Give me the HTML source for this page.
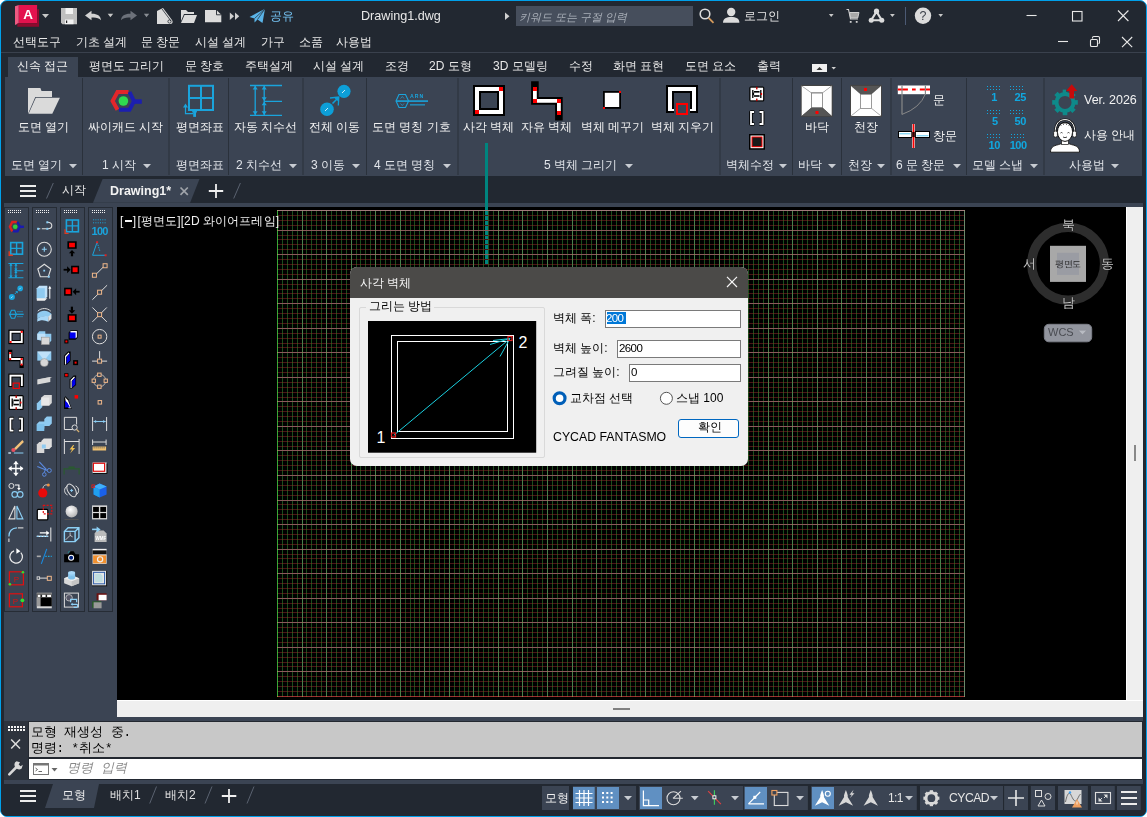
<!DOCTYPE html>
<html><head><meta charset="utf-8">
<style>
*{margin:0;padding:0;box-sizing:border-box}
html,body{width:1147px;height:817px;overflow:hidden;background:#ffffff}
body{font-family:"Liberation Sans",sans-serif;position:relative}
.a{position:absolute}
.t{position:absolute;white-space:pre;font-size:12px;line-height:14px;color:#f2f2f2}
#win{position:absolute;left:0;top:0;width:1147px;height:817px;background:#222831;border:1px solid #00a0ea;border-radius:7px;overflow:hidden}
svg{position:absolute;overflow:visible}
</style></head><body>
<div id="win"></div>
<!-- menu separator -->
<div class="a" style="left:1px;top:52px;width:1145px;height:1px;background:#3a414d"></div>
<!-- ribbon -->
<div class="a" style="left:8px;top:57px;width:70px;height:20px;background:#3b4453"></div>
<div class="a" style="left:5px;top:77px;width:1137px;height:99px;background:#3b4453"></div>
<!-- ===== FILE TABS ===== -->
<svg style="left:0;top:176px" width="260" height="28">
 <path d="M20,10 H36 M20,15 H36 M20,20 H36" stroke="#ececec" stroke-width="2"/>
 <path d="M53.3,7 L46.5,22.5 M240.4,7 L233.7,22.5" stroke="#5a6270" stroke-width="1"/>
 <polygon points="102.6,3 199.5,3 190.1,26.8 93,26.8" fill="#3b4453"/>
 <path d="M180.5,11.5 L187.8,18.8 M187.8,11.5 L180.5,18.8" stroke="#a0a4aa" stroke-width="1.7"/>
 <path d="M216,8 V22 M208.8,15 H223.2" stroke="#f0f0f0" stroke-width="1.8"/>
</svg>
<div class="t" style="left:62px;top:183px;color:#e6e6e6">시작</div>
<div class="t" style="left:110px;top:183.5px;color:#f2f2f2;font-weight:bold;font-size:12.5px">Drawing1*</div>
<!-- toolbar strip -->
<div class="a" style="left:4px;top:203px;width:1139px;height:4px;background:#3b4453"></div>
<div class="a" style="left:4px;top:207px;width:113px;height:510px;background:#3b4453"></div>
<!-- viewport -->
<div class="a" style="left:117px;top:207px;width:1009px;height:493px;background:#000"></div>
<div class="a" style="left:1126px;top:207px;width:17px;height:510px;background:#efefef;border-left:1px solid #fff"></div>
<div class="a" style="left:117px;top:700px;width:1026px;height:17px;background:#efefef;border-top:1px solid #fff"></div>
<div class="a" style="left:4px;top:717px;width:1139px;height:63px;background:#3b4453"></div>
<div class="a" style="left:4px;top:721px;width:25px;height:59px;background:#2d333d"></div>
<div class="a" style="left:28px;top:721px;width:1115px;height:58px;background:#232830"></div>
<div class="a" style="left:29px;top:722px;width:1113px;height:35px;background:#c8c8c8"></div>
<div class="a" style="left:29px;top:759px;width:1113px;height:20px;background:#fff"></div>

<!-- ===== TITLE BAR ===== -->
<svg style="left:0;top:0" width="300" height="30">
 <polygon points="15,6.3 18.8,5 18.8,23.2 15,25" fill="#ee5a82"/>
 <rect x="18.8" y="5" width="18.3" height="18.2" fill="#e3124e"/>
 <polygon points="17.3,23.2 37.1,23.2 37.1,9.2 39,9.2 39,26.8 17.3,26.8" fill="#8e0a2e"/>
 <text x="28" y="19" font-family="Liberation Sans" font-weight="bold" font-size="13.5" fill="#fff" text-anchor="middle">A</text>
 <polygon points="42,14 49,14 45.5,18" fill="#c8c8c8"/>
 <!-- floppy -->
 <path d="M61,8 H77 V24.2 H62.5 L61,22.7 Z" fill="#bfbfbf"/>
 <rect x="65.5" y="8" width="7.5" height="6" fill="#f2f2f2"/>
 <rect x="65" y="19.5" width="8.5" height="4.7" fill="#f2f2f2"/>
 <rect x="66" y="20.5" width="1.2" height="2.5" fill="#222"/>
 <!-- undo -->
 <path d="M85,15.5 L91.5,10.7 V13.8 C97,13.6 100.6,15.6 101,20.3 C99,17.8 96,17.2 91.5,17.5 V20.3 Z" fill="#d2d2d2"/>
 <polygon points="107.7,13.8 113.2,13.8 110.4,17.3" fill="#c8c8c8"/>
 <path d="M137,15.5 L130.5,10.7 V13.8 C125,13.6 121.4,15.6 121,20.3 C123,17.8 126,17.2 130.5,17.5 V20.3 Z" fill="#6c717a"/>
 <polygon points="143.9,13.8 149.2,13.8 146.5,17.3" fill="#8a8e95"/>
 <!-- sheet roll -->
 <path d="M157,11 L163,8 L172,20 C173.5,22.5 172,24 170,24 H157 Z" fill="#dcdcdc"/>
 <path d="M162,9 L171,21" stroke="#222831" stroke-width="0.8" fill="none"/>
 <circle cx="169.5" cy="21.5" r="1.6" fill="none" stroke="#222831" stroke-width="0.8"/>
 <!-- folder -->
 <path d="M181,10 H186 L188,12 H194 V14 H184 L181,21 Z" fill="#dcdcdc"/>
 <path d="M184.5,15 H197 L194,23 H181 Z" fill="#dcdcdc"/>
 <!-- page -->
 <path d="M205,10 H216.5 L221.3,14.8 V22.3 H205 Z" fill="#dcdcdc"/>
 <path d="M216.5,10 V14.8 H221.3" fill="none" stroke="#222831" stroke-width="0.9"/>
 <!-- >> -->
 <polygon points="229.8,12.5 234,16.2 229.8,20" fill="#d0d0d0"/>
 <polygon points="235,12.5 239.2,16.2 235,20" fill="#d0d0d0"/>
 <!-- plane -->
 <path d="M249.5,17 L265,8.8 L262.5,22.9 L257.5,19.5 L254.5,22.5 L254.5,18.5 Z" fill="#5ab4e8"/>
 <path d="M254.5,18.5 L265,8.8 M257.5,19.5 L265,8.8" stroke="#222831" stroke-width="0.7"/>
</svg>
<div class="t" style="left:270px;top:9px;color:#74c2f2">공유</div>
<div class="t" style="left:361px;top:9px;font-size:12.6px;color:#e8e8e8">Drawing1.dwg</div>
<svg style="left:500px;top:0" width="30" height="30"><polygon points="505,12.5 509.5,16.2 505,20" transform="translate(-500,0)" fill="#d0d0d0"/></svg>
<div class="a" style="left:516px;top:6px;width:177px;height:20px;background:#464e5c"></div>
<div class="t" style="left:519px;top:9.5px;font-style:italic;color:#a9afb8;font-size:11px">키워드 또는 구절 입력</div>
<svg style="left:690px;top:0" width="270" height="30">
 <g transform="translate(-690,0)">
 <circle cx="705" cy="14" r="4.8" fill="none" stroke="#dcdcdc" stroke-width="1.6"/>
 <path d="M708.6,17.8 L713.5,22.8" stroke="#d39a5c" stroke-width="1.8"/>
 <circle cx="731.2" cy="12" r="4.2" fill="#dcdcdc"/>
 <path d="M723,22.7 C723,18.5 726.5,17 731.2,17 C736,17 739.4,18.5 739.4,22.7 Z" fill="#dcdcdc"/>
 <polygon points="828.9,14 833.6,14 831.2,17" fill="#c8c8c8"/>
 <!-- cart -->
 <path d="M846.5,9.5 H848.5 L850.5,19 H858" fill="none" stroke="#d0d0d0" stroke-width="1.1"/>
 <path d="M849.5,12.5 H859 L857.7,18 H850.7 Z" fill="#a8a8a8" stroke="#d0d0d0" stroke-width="1"/>
 <rect x="849.8" y="21" width="1.8" height="1.8" fill="#d0d0d0"/><rect x="855.8" y="21" width="1.8" height="1.8" fill="#d0d0d0"/>
 <!-- A360 -->
 <path d="M876.5,11.6 L871.2,20.2 H881.8 Z" fill="none" stroke="#dcdcdc" stroke-width="2.1" stroke-linejoin="round"/>
 <circle cx="876.5" cy="11.2" r="2.6" fill="#dcdcdc"/><circle cx="871.2" cy="20.3" r="2.5" fill="#dcdcdc"/><circle cx="881.8" cy="20.3" r="2.5" fill="#dcdcdc"/>
 <polygon points="890,14 894.8,14 892.4,17" fill="#c8c8c8"/>
 <rect x="905" y="7" width="1" height="18" fill="#4c5a74"/>
 <circle cx="923" cy="15.8" r="8.2" fill="#dcdcdc"/>
 <text x="923" y="20.3" font-family="Liberation Sans" font-size="12.5" fill="#3a3f48" text-anchor="middle">?</text>
 <polygon points="938.4,14 943,14 940.7,17" fill="#c8c8c8"/>
 </g>
</svg>
<div class="t" style="left:744px;top:9px;color:#e8e8e8">로그인</div>
<svg style="left:1000px;top:0" width="147" height="55">
 <g transform="translate(-1000,0)" stroke="#e8e8e8" stroke-width="1.1" fill="none">
 <path d="M1026.5,15.5 H1036.6"/>
 <rect x="1072.5" y="11.5" width="9.5" height="9.5"/>
 <path d="M1118,10.5 L1128.4,21 M1128.4,10.5 L1118,21"/>
 <path d="M1058,41.5 H1068"/>
 <rect x="1090.5" y="39.5" width="7" height="7" rx="1.3"/>
 <path d="M1092.5,38.5 V37.8 Q1092.5,36.5 1093.8,36.5 H1098.2 Q1099.5,36.5 1099.5,37.8 V42.2 Q1099.5,43.5 1098.5,43.5"/>
 <path d="M1122,37 L1132.2,47.2 M1132.2,37 L1122,47.2"/>
 </g>
</svg>
<!-- ===== MENU ===== -->
<div class="t" style="left:13px;top:35px;color:#e8e8e8">선택도구</div>
<div class="t" style="left:76px;top:35px;color:#e8e8e8">기초 설계</div>
<div class="t" style="left:141px;top:35px;color:#e8e8e8">문 창문</div>
<div class="t" style="left:195px;top:35px;color:#e8e8e8">시설 설계</div>
<div class="t" style="left:261px;top:35px;color:#e8e8e8">가구</div>
<div class="t" style="left:299px;top:35px;color:#e8e8e8">소품</div>
<div class="t" style="left:336px;top:35px;color:#e8e8e8">사용법</div>
<!-- ===== TABS ===== -->
<div class="t" style="left:17px;top:59px;color:#f0f0f0">신속 접근</div>
<div class="t" style="left:89px;top:59px;color:#e8e8e8">평면도 그리기</div>
<div class="t" style="left:185px;top:59px;color:#e8e8e8">문 창호</div>
<div class="t" style="left:245px;top:59px;color:#e8e8e8">주택설계</div>
<div class="t" style="left:313px;top:59px;color:#e8e8e8">시설 설계</div>
<div class="t" style="left:385px;top:59px;color:#e8e8e8">조경</div>
<div class="t" style="left:429px;top:59px;color:#e8e8e8">2D 도형</div>
<div class="t" style="left:493px;top:59px;color:#e8e8e8">3D 모델링</div>
<div class="t" style="left:569px;top:59px;color:#e8e8e8">수정</div>
<div class="t" style="left:613px;top:59px;color:#e8e8e8">화면 표현</div>
<div class="t" style="left:685px;top:59px;color:#e8e8e8">도면 요소</div>
<div class="t" style="left:757px;top:59px;color:#e8e8e8">출력</div>
<div class="a" style="left:812px;top:64px;width:15px;height:8px;background:#f0f0f0"></div>
<svg style="left:812px;top:64px" width="30" height="10"><polygon points="4.5,6 10.5,6 7.5,3" fill="#333"/><polygon points="19.5,3 24,3 21.7,5.5" fill="#d0d0d0"/></svg>

<!-- ===== RIBBON ===== -->
<svg style="left:0;top:0" width="1147" height="180">
 <g fill="#2a313b">
  <rect x="82" y="78" width="1" height="97"/><rect x="168.5" y="78" width="1" height="97"/>
  <rect x="228" y="78" width="1" height="97"/><rect x="302.5" y="78" width="1" height="97"/>
  <rect x="366" y="78" width="1" height="97"/><rect x="457.5" y="78" width="1" height="97"/>
  <rect x="719.5" y="78" width="1" height="97"/><rect x="792" y="78" width="1" height="97"/>
  <rect x="841" y="78" width="1" height="97"/><rect x="890.5" y="78" width="1" height="97"/>
  <rect x="966" y="78" width="1" height="97"/><rect x="1043.5" y="78" width="1" height="97"/>
 </g>
 <!-- folder -->
 <path d="M28,88 H40.4 L41.5,91 H52 V97 H35.3 L28,113.8 Z" fill="#dadada"/>
 <path d="M35.8,97.8 H59.9 L52.3,113.8 H28.6 Z" fill="#dadada"/>
 <!-- cycad -->
 <path d="M128.5,92 H117.5 L112.6,101 L117.5,109.8" fill="none" stroke="#e3262a" stroke-width="4"/>
 <path d="M129.5,92 L134,101.3 L129.5,109.8 H119" fill="none" stroke="#1c1fb0" stroke-width="4"/>
 <rect x="133" y="99.3" width="8.8" height="4.5" fill="#1c1fb0"/>
 <circle cx="123.4" cy="101" r="4.8" fill="#2fdb4f"/>
 <!-- grid -->
 <g fill="none" stroke="#1aa4dc" stroke-width="2">
  <rect x="189" y="85.8" width="24" height="24.2"/>
  <path d="M201,85.8 V110 M189,98 H213"/>
 </g>
 <path d="M185.5,105 V113.6 H193" fill="none" stroke="#1aa4dc" stroke-width="1.2"/>
 <polygon points="183,107.5 185.5,103.6 188,107.5" fill="#1aa4dc"/>
 <rect x="192.2" y="110.5" width="4.7" height="2" fill="#1aa4dc"/><rect x="193.2" y="112" width="2.8" height="4.9" fill="#1aa4dc"/>
 <!-- dimension -->
 <g stroke="#1aa4dc" stroke-width="1.3" fill="none">
  <path d="M250,85.5 H282 M264.7,101.3 H282 M250,115.3 H282 M255.2,85.5 V115.3 M264.2,85.5 V115.3"/>
 </g>
 <g fill="#1aa4dc">
  <polygon points="252.7,89.5 255.2,85.8 257.7,89.5"/><polygon points="252.7,111.3 255.2,115 257.7,111.3"/>
  <polygon points="261.7,89.5 264.2,85.8 266.7,89.5"/><polygon points="261.7,97.3 264.2,101 266.7,97.3"/>
  <polygon points="261.7,105.3 264.2,101.6 266.7,105.3"/><polygon points="261.7,111.3 264.2,115 266.7,111.3"/>
 </g>
 <!-- move -->
 <circle cx="327" cy="109.2" r="6.8" fill="#0d9fd8"/><circle cx="344" cy="91.3" r="6.6" fill="#0d9fd8"/>
 <path d="M325,111 L328,108 M342,93 L345,90" stroke="#fff" stroke-width="0.8"/>
 <path d="M332.5,103.5 L338.5,97.5" stroke="#0d9fd8" stroke-width="1.6"/>
 <polygon points="334,97 338.8,97 338.8,101.8 337.5,100.8 335,98.5" fill="#0d9fd8"/>
 <path d="M330,98 L338.8,97 L338.3,105.5" fill="none" stroke="#0d9fd8" stroke-width="1.3"/>
 <!-- name symbol -->
 <path d="M399,94.5 H405.5 L408.6,101 L405.5,107.5 H399 L396,101 Z" fill="none" stroke="#1aa4dc" stroke-width="1.1"/>
 <rect x="396" y="100.3" width="32" height="1.6" fill="#1aa4dc"/>
 <path d="M400.5,98.5 L402.3,96.5 L404,98.5 M400.5,103.5 L402.3,105.5 L404,103.5" fill="none" stroke="#1aa4dc" stroke-width="0.7"/>
 <text x="410" y="98.2" font-family="Liberation Sans" font-weight="bold" font-size="5.2" fill="#1aa4dc" letter-spacing="1">ARN</text>
 <g fill="#1aa4dc"><rect x="410" y="104" width="15" height="1.6" opacity="0.7"/></g>
 <!-- rect wall -->
 <rect x="473" y="85" width="32" height="31" fill="#000"/>
 <rect x="475" y="87" width="28" height="27" fill="#fff"/>
 <rect x="479" y="91" width="20" height="19" fill="#000"/>
 <rect x="481" y="93" width="16" height="15" fill="#3b4453"/>
 <rect x="499" y="87" width="4" height="4" fill="#f00"/><rect x="475" y="110" width="4" height="4" fill="#f00"/>
 <!-- free wall -->
 <path d="M534.9,85 V100.9 H558.9 V116.6" fill="none" stroke="#000" stroke-width="7.6" stroke-linecap="square"/>
 <path d="M534.9,87 V100.9 H558.9 V114.6" fill="none" stroke="#fff" stroke-width="3.8"/>
 <g fill="#f00"><rect x="533" y="87" width="4" height="4"/><rect x="533" y="99" width="4" height="4"/><rect x="557" y="99" width="4" height="4"/><rect x="557" y="111" width="4" height="4"/></g>
 <!-- fill wall -->
 <rect x="603" y="91" width="18" height="17.8" fill="#000"/>
 <rect x="604.8" y="92.8" width="14.4" height="14.2" fill="#fff"/>
 <rect x="619" y="91" width="2" height="2" fill="#f00"/><rect x="603" y="107" width="2" height="2" fill="#f00"/>
 <!-- erase wall -->
 <rect x="666" y="85" width="32" height="28" fill="#000"/>
 <rect x="668" y="87" width="28" height="24" fill="#fff"/>
 <rect x="672" y="91" width="20" height="18" fill="#000"/>
 <rect x="674" y="93" width="16" height="22" fill="#3b4453"/>
 <rect x="674" y="107" width="16" height="8" fill="#3b4453"/>
 <rect x="677" y="104" width="10" height="10" fill="none" stroke="#f00" stroke-width="2"/>
 <!-- wall edit small icons -->
 <g transform="translate(748.5,86)"><rect x="0.8" y="0.5" width="15" height="15" rx="1.5" fill="#000"/><rect x="2" y="1.7" width="12.6" height="12.6" fill="#fff"/><path d="M4.3,4 V12 M12.3,4 V12" stroke="#000" stroke-width="1.3"/><rect x="5.5" y="5" width="5.5" height="1.6" fill="#000"/><rect x="5.5" y="9.2" width="5.5" height="1.6" fill="#000"/><rect x="4.3" y="6.6" width="1.3" height="2.6" fill="#000"/>
<rect x="7.6" y="0.8" width="1.4" height="2.6" fill="#b00"/><rect x="12.3" y="7" width="1.3" height="2" fill="#f00"/><rect x="7.6" y="12.6" width="1.4" height="2.6" fill="#b00"/></g>
 <g transform="translate(748.5,110)"><path d="M5.8,2 H2.5 V14 H5.8 M10.8,2 H14.1 V14 H10.8" stroke="#000" stroke-width="3.6" fill="none" stroke-linejoin="round"/><path d="M5.5,2 H2.5 V14 H5.5 M11,2 H14.1 V14 H11" stroke="#fff" stroke-width="1.8" fill="none"/></g>
 <rect x="749" y="134" width="16" height="15.7" fill="#000"/>
 <rect x="750.5" y="135.5" width="13" height="12.7" fill="#fff"/>
 <rect x="751.5" y="136.5" width="11" height="10.7" fill="#f00"/>
 <rect x="752.5" y="137.5" width="9" height="8.7" fill="#1a1a1a"/>
 <!-- floor -->
 <rect x="800.7" y="84.9" width="32" height="32" fill="#444"/>
 <polygon points="801.7,85.9 831.7,85.9 822.9,92.6 811,92.6" fill="#fff"/>
 <polygon points="801.7,85.9 811,92.6 811,107.9 801.7,116" fill="#fdfdfd"/>
 <polygon points="831.7,85.9 822.9,92.6 822.9,107.9 831.7,116" fill="#fdfdfd"/>
 <polygon points="801.7,116 811,107.9 822.9,107.9 831.7,116" fill="#555"/>
 <rect x="811.5" y="93.1" width="11" height="14.3" fill="#fff" stroke="#888" stroke-width="0.6"/>
 <path d="M801.7,85.9 L811,92.6 M831.7,85.9 L822.9,92.6" stroke="#999" stroke-width="0.6"/>
 <rect x="815.5" y="111" width="3" height="3" fill="#f00"/>
 <!-- ceiling -->
 <rect x="850" y="84.9" width="32" height="32" fill="#444"/>
 <polygon points="851,85.9 881,85.9 871.8,94 860.2,94" fill="#555"/>
 <polygon points="851,85.9 860.2,94 860.2,108.6 851,116" fill="#fdfdfd"/>
 <polygon points="881,85.9 871.8,94 871.8,108.6 881,116" fill="#fdfdfd"/>
 <polygon points="851,116 860.2,108.6 871.8,108.6 881,116" fill="#fff"/>
 <rect x="860.5" y="94.3" width="11" height="14" fill="#fff" stroke="#888" stroke-width="0.6"/>
 <path d="M851,116 L860.2,108.6 M881,116 L871.8,108.6" stroke="#999" stroke-width="0.6"/>
 <rect x="864" y="88" width="3" height="3" fill="#f00"/>
 <!-- door -->
 <rect x="897.8" y="85.5" width="32.2" height="8.7" fill="#fff"/>
 <path d="M897.8,89.6 H930" stroke="#f00" stroke-width="2" stroke-dasharray="10.1,4.1,3.7,4.1,10.2"/>
 <path d="M902,85.5 V114.4 M925.4,85.5 V94" stroke="#888" stroke-width="1.2" fill="none"/>
 <path d="M902,114.4 Q920,108 925.4,94" stroke="#888" stroke-width="1" fill="none"/>
 <!-- window -->
 <rect x="898" y="131" width="32" height="7" fill="#000"/>
 <rect x="899" y="132" width="30" height="5" fill="#fff"/>
 <path d="M899.5,133.8 H910.5 M916.5,135.8 H928.5" stroke="#5ac8f0" stroke-width="1"/>
 <rect x="911.3" y="131" width="4.6" height="7" fill="#000"/>
 <rect x="912.2" y="124" width="2.6" height="24" fill="#ffd0d0"/><rect x="912.8" y="124" width="1.4" height="24" fill="#f00"/><rect x="912.2" y="132" width="2.6" height="5" fill="#300"/>
 <!-- snap -->
 <g fill="#10a8e0" shape-rendering="crispEdges"><rect x="987" y="86" width="1.2" height="1.2"/><rect x="987" y="89" width="1.2" height="1.2"/><rect x="990" y="86" width="1.2" height="1.2"/><rect x="990" y="89" width="1.2" height="1.2"/><rect x="993" y="86" width="1.2" height="1.2"/><rect x="993" y="89" width="1.2" height="1.2"/><rect x="996" y="86" width="1.2" height="1.2"/><rect x="996" y="89" width="1.2" height="1.2"/><rect x="999" y="86" width="1.2" height="1.2"/><rect x="999" y="89" width="1.2" height="1.2"/><rect x="1010" y="86" width="1.2" height="1.2"/><rect x="1010" y="89" width="1.2" height="1.2"/><rect x="1013" y="86" width="1.2" height="1.2"/><rect x="1013" y="89" width="1.2" height="1.2"/><rect x="1016" y="86" width="1.2" height="1.2"/><rect x="1016" y="89" width="1.2" height="1.2"/><rect x="1019" y="86" width="1.2" height="1.2"/><rect x="1019" y="89" width="1.2" height="1.2"/><rect x="1022" y="86" width="1.2" height="1.2"/><rect x="1022" y="89" width="1.2" height="1.2"/><rect x="987" y="110" width="1.2" height="1.2"/><rect x="987" y="113" width="1.2" height="1.2"/><rect x="990" y="110" width="1.2" height="1.2"/><rect x="990" y="113" width="1.2" height="1.2"/><rect x="993" y="110" width="1.2" height="1.2"/><rect x="993" y="113" width="1.2" height="1.2"/><rect x="996" y="110" width="1.2" height="1.2"/><rect x="996" y="113" width="1.2" height="1.2"/><rect x="999" y="110" width="1.2" height="1.2"/><rect x="999" y="113" width="1.2" height="1.2"/><rect x="1010" y="110" width="1.2" height="1.2"/><rect x="1010" y="113" width="1.2" height="1.2"/><rect x="1013" y="110" width="1.2" height="1.2"/><rect x="1013" y="113" width="1.2" height="1.2"/><rect x="1016" y="110" width="1.2" height="1.2"/><rect x="1016" y="113" width="1.2" height="1.2"/><rect x="1019" y="110" width="1.2" height="1.2"/><rect x="1019" y="113" width="1.2" height="1.2"/><rect x="1022" y="110" width="1.2" height="1.2"/><rect x="1022" y="113" width="1.2" height="1.2"/><rect x="987" y="134" width="1.2" height="1.2"/><rect x="987" y="137" width="1.2" height="1.2"/><rect x="990" y="134" width="1.2" height="1.2"/><rect x="990" y="137" width="1.2" height="1.2"/><rect x="993" y="134" width="1.2" height="1.2"/><rect x="993" y="137" width="1.2" height="1.2"/><rect x="996" y="134" width="1.2" height="1.2"/><rect x="996" y="137" width="1.2" height="1.2"/><rect x="999" y="134" width="1.2" height="1.2"/><rect x="999" y="137" width="1.2" height="1.2"/><rect x="1011" y="134" width="1.2" height="1.2"/><rect x="1011" y="137" width="1.2" height="1.2"/><rect x="1014" y="134" width="1.2" height="1.2"/><rect x="1014" y="137" width="1.2" height="1.2"/><rect x="1017" y="134" width="1.2" height="1.2"/><rect x="1017" y="137" width="1.2" height="1.2"/><rect x="1020" y="134" width="1.2" height="1.2"/><rect x="1020" y="137" width="1.2" height="1.2"/><rect x="1023" y="134" width="1.2" height="1.2"/><rect x="1023" y="137" width="1.2" height="1.2"/></g>
 <g font-family="Liberation Sans" font-weight="bold" font-size="11" fill="#10a8e0" text-anchor="end" letter-spacing="-0.5">
  <text x="996.8" y="101.2">1</text><text x="1025.8" y="101.2">25</text>
  <text x="997.6" y="125.3">5</text><text x="1025.8" y="125.3">50</text>
  <text x="999.8" y="149.1">10</text><text x="1026.6" y="149.1">100</text>
 </g>
 <!-- gear -->
 <g transform="translate(1065,102.4)">
  <circle r="8.5" fill="none" stroke="#0e8a8a" stroke-width="4"/>
  <g fill="#0e8a8a"><rect x="-2.3" y="-12.8" width="4.6" height="3.6" transform="rotate(0)"/><rect x="-2.3" y="-12.8" width="4.6" height="3.6" transform="rotate(45)"/><rect x="-2.3" y="-12.8" width="4.6" height="3.6" transform="rotate(90)"/><rect x="-2.3" y="-12.8" width="4.6" height="3.6" transform="rotate(135)"/><rect x="-2.3" y="-12.8" width="4.6" height="3.6" transform="rotate(180)"/><rect x="-2.3" y="-12.8" width="4.6" height="3.6" transform="rotate(225)"/><rect x="-2.3" y="-12.8" width="4.6" height="3.6" transform="rotate(270)"/><rect x="-2.3" y="-12.8" width="4.6" height="3.6" transform="rotate(315)"/></g>
 </g>
 <polygon points="1066,84 1078,84 1078,92 1066,92" fill="#3b4453"/>
 <polygon points="1069.4,98.5 1069.4,90.9 1066.2,90.9 1071.7,84.2 1077.3,90.9 1074.1,90.9 1074.1,98.5" fill="#c80a0a"/>
 <!-- person -->
 <g>
  <path d="M1050.5,152.2 C1050.5,147.5 1053,145.8 1058.5,144.6 L1061.5,143.5 H1068.5 L1071.5,144.6 C1077,145.8 1079.5,147.5 1079.5,152.2 Z" fill="#fff" stroke="#111" stroke-width="0.9"/>
  <rect x="1061.5" y="139" width="7" height="5.5" fill="#fff" stroke="#111" stroke-width="0.7"/>
  <ellipse cx="1065" cy="131.8" rx="7.6" ry="9.6" fill="#fff" stroke="#111" stroke-width="1"/>
  <path d="M1055.2,133 C1055,124 1059,119.6 1065,119.6 C1071,119.6 1075,124 1074.8,133" fill="none" stroke="#111" stroke-width="2.4"/>
  <path d="M1055.2,133 C1055,124 1059,119.6 1065,119.6 C1071,119.6 1075,124 1074.8,133" fill="none" stroke="#fff" stroke-width="1"/>
  <path d="M1058,128 C1059,124 1062,123 1065,123 C1068,123 1071,124 1072,128" fill="none" stroke="#111" stroke-width="0.8"/>
  <g fill="#444"><circle cx="1061" cy="125.5" r="0.5"/><circle cx="1063.5" cy="124.6" r="0.5"/><circle cx="1066.5" cy="124.6" r="0.5"/><circle cx="1069" cy="125.5" r="0.5"/></g>
  <rect x="1053.6" y="131" width="3.8" height="6.2" rx="1.6" fill="#fff" stroke="#111" stroke-width="0.8"/>
  <rect x="1072.6" y="131" width="3.8" height="6.2" rx="1.6" fill="#fff" stroke="#111" stroke-width="0.8"/>
  <path d="M1060.5,133 Q1061.5,132 1062.5,133 M1067.5,133 Q1068.5,132 1069.5,133 M1063,137 Q1065,138.3 1067,137" stroke="#111" stroke-width="0.8" fill="none"/>
 </g>
 <!-- dropdown arrows -->
 <g fill="#c8ccd2">
  <polygon points="69,164 77,164 73,168.3"/>
  <polygon points="143,164 151,164 147,168.3"/>
  <polygon points="289,164 297,164 293,168.3"/>
  <polygon points="352,164 360,164 356,168.3"/>
  <polygon points="443,164 451,164 447,168.3"/>
  <polygon points="625,164 633,164 629,168.3"/>
  <polygon points="779,164 787,164 783,168.3"/>
  <polygon points="828,164 836,164 832,168.3"/>
  <polygon points="877,164 885,164 881,168.3"/>
  <polygon points="953,164 961,164 957,168.3"/>
  <polygon points="1030,164 1038,164 1034,168.3"/>
  <polygon points="1111,164 1119,164 1115,168.3"/>
 </g>
</svg>
<div class="t" style="left:18px;top:120px">도면 열기</div>
<div class="t" style="left:88px;top:120px">싸이캐드 시작</div>
<div class="t" style="left:176px;top:120px">평면좌표</div>
<div class="t" style="left:234px;top:120px">자동 치수선</div>
<div class="t" style="left:309px;top:120px">전체 이동</div>
<div class="t" style="left:372px;top:120px">도면 명칭 기호</div>
<div class="t" style="left:463px;top:120px">사각 벽체</div>
<div class="t" style="left:521px;top:120px">자유 벽체</div>
<div class="t" style="left:581px;top:120px">벽체 메꾸기</div>
<div class="t" style="left:651px;top:120px">벽체 지우기</div>
<div class="t" style="left:805px;top:120px">바닥</div>
<div class="t" style="left:854px;top:120px">천장</div>
<div class="t" style="left:933px;top:93px">문</div>
<div class="t" style="left:933px;top:129px">창문</div>
<div class="t" style="left:1084px;top:93px;font-size:12.5px">Ver. 2026</div>
<div class="t" style="left:1084px;top:128px">사용 안내</div>
<div class="t" style="left:11px;top:158px;color:#e2e5ea">도면 열기</div>
<div class="t" style="left:102px;top:158px;color:#e2e5ea">1 시작</div>
<div class="t" style="left:176px;top:158px;color:#e2e5ea">평면좌표</div>
<div class="t" style="left:236px;top:158px;color:#e2e5ea">2 치수선</div>
<div class="t" style="left:311px;top:158px;color:#e2e5ea">3 이동</div>
<div class="t" style="left:374px;top:158px;color:#e2e5ea">4 도면 명칭</div>
<div class="t" style="left:544px;top:158px;color:#e2e5ea">5 벽체 그리기</div>
<div class="t" style="left:726px;top:158px;color:#e2e5ea">벽체수정</div>
<div class="t" style="left:798px;top:158px;color:#e2e5ea">바닥</div>
<div class="t" style="left:848px;top:158px;color:#e2e5ea">천장</div>
<div class="t" style="left:896px;top:158px;color:#e2e5ea">6 문 창문</div>
<div class="t" style="left:972px;top:158px;color:#e2e5ea">모델 스냅</div>
<div class="t" style="left:1069px;top:158px;color:#e2e5ea">사용법</div>
<div class="a" style="left:485px;top:143px;width:3px;height:121px;background:#00857f"></div>
<!--GRID-->
<svg style="left:0;top:0" width="1147" height="817" shape-rendering="crispEdges">
<g>
<rect x="277" y="696" width="688" height="1" fill="#9a3030"/>
<rect x="277" y="691" width="688" height="1" fill="#4a1616"/>
<rect x="277" y="686" width="688" height="1" fill="#4a1616"/>
<rect x="277" y="681" width="688" height="1" fill="#4a1616"/>
<rect x="277" y="676" width="688" height="1" fill="#4a1616"/>
<rect x="277" y="671" width="688" height="1" fill="#8a5a5a"/>
<rect x="277" y="666" width="688" height="1" fill="#4a1616"/>
<rect x="277" y="662" width="688" height="1" fill="#4a1616"/>
<rect x="277" y="657" width="688" height="1" fill="#4a1616"/>
<rect x="277" y="652" width="688" height="1" fill="#4a1616"/>
<rect x="277" y="647" width="688" height="1" fill="#8a5a5a"/>
<rect x="277" y="642" width="688" height="1" fill="#4a1616"/>
<rect x="277" y="637" width="688" height="1" fill="#4a1616"/>
<rect x="277" y="632" width="688" height="1" fill="#4a1616"/>
<rect x="277" y="627" width="688" height="1" fill="#4a1616"/>
<rect x="277" y="622" width="688" height="1" fill="#8a5a5a"/>
<rect x="277" y="617" width="688" height="1" fill="#4a1616"/>
<rect x="277" y="612" width="688" height="1" fill="#4a1616"/>
<rect x="277" y="608" width="688" height="1" fill="#4a1616"/>
<rect x="277" y="603" width="688" height="1" fill="#4a1616"/>
<rect x="277" y="598" width="688" height="1" fill="#8a5a5a"/>
<rect x="277" y="593" width="688" height="1" fill="#4a1616"/>
<rect x="277" y="588" width="688" height="1" fill="#4a1616"/>
<rect x="277" y="583" width="688" height="1" fill="#4a1616"/>
<rect x="277" y="578" width="688" height="1" fill="#4a1616"/>
<rect x="277" y="573" width="688" height="1" fill="#8a5a5a"/>
<rect x="277" y="568" width="688" height="1" fill="#4a1616"/>
<rect x="277" y="563" width="688" height="1" fill="#4a1616"/>
<rect x="277" y="558" width="688" height="1" fill="#4a1616"/>
<rect x="277" y="554" width="688" height="1" fill="#4a1616"/>
<rect x="277" y="549" width="688" height="1" fill="#8a5a5a"/>
<rect x="277" y="544" width="688" height="1" fill="#4a1616"/>
<rect x="277" y="539" width="688" height="1" fill="#4a1616"/>
<rect x="277" y="534" width="688" height="1" fill="#4a1616"/>
<rect x="277" y="529" width="688" height="1" fill="#4a1616"/>
<rect x="277" y="524" width="688" height="1" fill="#8a5a5a"/>
<rect x="277" y="519" width="688" height="1" fill="#4a1616"/>
<rect x="277" y="514" width="688" height="1" fill="#4a1616"/>
<rect x="277" y="509" width="688" height="1" fill="#4a1616"/>
<rect x="277" y="504" width="688" height="1" fill="#4a1616"/>
<rect x="277" y="500" width="688" height="1" fill="#8a5a5a"/>
<rect x="277" y="495" width="688" height="1" fill="#4a1616"/>
<rect x="277" y="490" width="688" height="1" fill="#4a1616"/>
<rect x="277" y="485" width="688" height="1" fill="#4a1616"/>
<rect x="277" y="480" width="688" height="1" fill="#4a1616"/>
<rect x="277" y="475" width="688" height="1" fill="#8a5a5a"/>
<rect x="277" y="470" width="688" height="1" fill="#4a1616"/>
<rect x="277" y="465" width="688" height="1" fill="#4a1616"/>
<rect x="277" y="460" width="688" height="1" fill="#4a1616"/>
<rect x="277" y="455" width="688" height="1" fill="#4a1616"/>
<rect x="277" y="450" width="688" height="1" fill="#8a5a5a"/>
<rect x="277" y="446" width="688" height="1" fill="#4a1616"/>
<rect x="277" y="441" width="688" height="1" fill="#4a1616"/>
<rect x="277" y="436" width="688" height="1" fill="#4a1616"/>
<rect x="277" y="431" width="688" height="1" fill="#4a1616"/>
<rect x="277" y="426" width="688" height="1" fill="#8a5a5a"/>
<rect x="277" y="421" width="688" height="1" fill="#4a1616"/>
<rect x="277" y="416" width="688" height="1" fill="#4a1616"/>
<rect x="277" y="411" width="688" height="1" fill="#4a1616"/>
<rect x="277" y="406" width="688" height="1" fill="#4a1616"/>
<rect x="277" y="401" width="688" height="1" fill="#8a5a5a"/>
<rect x="277" y="397" width="688" height="1" fill="#4a1616"/>
<rect x="277" y="392" width="688" height="1" fill="#4a1616"/>
<rect x="277" y="387" width="688" height="1" fill="#4a1616"/>
<rect x="277" y="382" width="688" height="1" fill="#4a1616"/>
<rect x="277" y="377" width="688" height="1" fill="#8a5a5a"/>
<rect x="277" y="372" width="688" height="1" fill="#4a1616"/>
<rect x="277" y="367" width="688" height="1" fill="#4a1616"/>
<rect x="277" y="362" width="688" height="1" fill="#4a1616"/>
<rect x="277" y="357" width="688" height="1" fill="#4a1616"/>
<rect x="277" y="352" width="688" height="1" fill="#8a5a5a"/>
<rect x="277" y="347" width="688" height="1" fill="#4a1616"/>
<rect x="277" y="343" width="688" height="1" fill="#4a1616"/>
<rect x="277" y="338" width="688" height="1" fill="#4a1616"/>
<rect x="277" y="333" width="688" height="1" fill="#4a1616"/>
<rect x="277" y="328" width="688" height="1" fill="#8a5a5a"/>
<rect x="277" y="323" width="688" height="1" fill="#4a1616"/>
<rect x="277" y="318" width="688" height="1" fill="#4a1616"/>
<rect x="277" y="313" width="688" height="1" fill="#4a1616"/>
<rect x="277" y="308" width="688" height="1" fill="#4a1616"/>
<rect x="277" y="303" width="688" height="1" fill="#8a5a5a"/>
<rect x="277" y="298" width="688" height="1" fill="#4a1616"/>
<rect x="277" y="293" width="688" height="1" fill="#4a1616"/>
<rect x="277" y="289" width="688" height="1" fill="#4a1616"/>
<rect x="277" y="284" width="688" height="1" fill="#4a1616"/>
<rect x="277" y="279" width="688" height="1" fill="#8a5a5a"/>
<rect x="277" y="274" width="688" height="1" fill="#4a1616"/>
<rect x="277" y="269" width="688" height="1" fill="#4a1616"/>
<rect x="277" y="264" width="688" height="1" fill="#4a1616"/>
<rect x="277" y="259" width="688" height="1" fill="#4a1616"/>
<rect x="277" y="254" width="688" height="1" fill="#8a5a5a"/>
<rect x="277" y="249" width="688" height="1" fill="#4a1616"/>
<rect x="277" y="244" width="688" height="1" fill="#4a1616"/>
<rect x="277" y="239" width="688" height="1" fill="#4a1616"/>
<rect x="277" y="235" width="688" height="1" fill="#4a1616"/>
<rect x="277" y="230" width="688" height="1" fill="#8a5a5a"/>
<rect x="277" y="225" width="688" height="1" fill="#4a1616"/>
<rect x="277" y="220" width="688" height="1" fill="#4a1616"/>
<rect x="277" y="215" width="688" height="1" fill="#4a1616"/>
<rect x="277" y="210" width="688" height="1" fill="#a07a7a"/>
</g><g style="mix-blend-mode:lighten">
<rect x="277" y="210" width="1" height="487" fill="#38a838"/>
<rect x="282" y="210" width="1" height="487" fill="#1c4c1c"/>
<rect x="287" y="210" width="1" height="487" fill="#1c4c1c"/>
<rect x="292" y="210" width="1" height="487" fill="#1c4c1c"/>
<rect x="297" y="210" width="1" height="487" fill="#1c4c1c"/>
<rect x="302" y="210" width="1" height="487" fill="#4a804a"/>
<rect x="306" y="210" width="1" height="487" fill="#1c4c1c"/>
<rect x="311" y="210" width="1" height="487" fill="#1c4c1c"/>
<rect x="316" y="210" width="1" height="487" fill="#1c4c1c"/>
<rect x="321" y="210" width="1" height="487" fill="#1c4c1c"/>
<rect x="326" y="210" width="1" height="487" fill="#4a804a"/>
<rect x="331" y="210" width="1" height="487" fill="#1c4c1c"/>
<rect x="336" y="210" width="1" height="487" fill="#1c4c1c"/>
<rect x="341" y="210" width="1" height="487" fill="#1c4c1c"/>
<rect x="346" y="210" width="1" height="487" fill="#1c4c1c"/>
<rect x="351" y="210" width="1" height="487" fill="#4a804a"/>
<rect x="356" y="210" width="1" height="487" fill="#1c4c1c"/>
<rect x="360" y="210" width="1" height="487" fill="#1c4c1c"/>
<rect x="365" y="210" width="1" height="487" fill="#1c4c1c"/>
<rect x="370" y="210" width="1" height="487" fill="#1c4c1c"/>
<rect x="375" y="210" width="1" height="487" fill="#4a804a"/>
<rect x="380" y="210" width="1" height="487" fill="#1c4c1c"/>
<rect x="385" y="210" width="1" height="487" fill="#1c4c1c"/>
<rect x="390" y="210" width="1" height="487" fill="#1c4c1c"/>
<rect x="395" y="210" width="1" height="487" fill="#1c4c1c"/>
<rect x="400" y="210" width="1" height="487" fill="#4a804a"/>
<rect x="405" y="210" width="1" height="487" fill="#1c4c1c"/>
<rect x="410" y="210" width="1" height="487" fill="#1c4c1c"/>
<rect x="414" y="210" width="1" height="487" fill="#1c4c1c"/>
<rect x="419" y="210" width="1" height="487" fill="#1c4c1c"/>
<rect x="424" y="210" width="1" height="487" fill="#4a804a"/>
<rect x="429" y="210" width="1" height="487" fill="#1c4c1c"/>
<rect x="434" y="210" width="1" height="487" fill="#1c4c1c"/>
<rect x="439" y="210" width="1" height="487" fill="#1c4c1c"/>
<rect x="444" y="210" width="1" height="487" fill="#1c4c1c"/>
<rect x="449" y="210" width="1" height="487" fill="#4a804a"/>
<rect x="454" y="210" width="1" height="487" fill="#1c4c1c"/>
<rect x="459" y="210" width="1" height="487" fill="#1c4c1c"/>
<rect x="464" y="210" width="1" height="487" fill="#1c4c1c"/>
<rect x="468" y="210" width="1" height="487" fill="#1c4c1c"/>
<rect x="473" y="210" width="1" height="487" fill="#4a804a"/>
<rect x="478" y="210" width="1" height="487" fill="#1c4c1c"/>
<rect x="483" y="210" width="1" height="487" fill="#1c4c1c"/>
<rect x="488" y="210" width="1" height="487" fill="#1c4c1c"/>
<rect x="493" y="210" width="1" height="487" fill="#1c4c1c"/>
<rect x="498" y="210" width="1" height="487" fill="#4a804a"/>
<rect x="503" y="210" width="1" height="487" fill="#1c4c1c"/>
<rect x="508" y="210" width="1" height="487" fill="#1c4c1c"/>
<rect x="513" y="210" width="1" height="487" fill="#1c4c1c"/>
<rect x="518" y="210" width="1" height="487" fill="#1c4c1c"/>
<rect x="522" y="210" width="1" height="487" fill="#4a804a"/>
<rect x="527" y="210" width="1" height="487" fill="#1c4c1c"/>
<rect x="532" y="210" width="1" height="487" fill="#1c4c1c"/>
<rect x="537" y="210" width="1" height="487" fill="#1c4c1c"/>
<rect x="542" y="210" width="1" height="487" fill="#1c4c1c"/>
<rect x="547" y="210" width="1" height="487" fill="#4a804a"/>
<rect x="552" y="210" width="1" height="487" fill="#1c4c1c"/>
<rect x="557" y="210" width="1" height="487" fill="#1c4c1c"/>
<rect x="562" y="210" width="1" height="487" fill="#1c4c1c"/>
<rect x="567" y="210" width="1" height="487" fill="#1c4c1c"/>
<rect x="572" y="210" width="1" height="487" fill="#4a804a"/>
<rect x="576" y="210" width="1" height="487" fill="#1c4c1c"/>
<rect x="581" y="210" width="1" height="487" fill="#1c4c1c"/>
<rect x="586" y="210" width="1" height="487" fill="#1c4c1c"/>
<rect x="591" y="210" width="1" height="487" fill="#1c4c1c"/>
<rect x="596" y="210" width="1" height="487" fill="#4a804a"/>
<rect x="601" y="210" width="1" height="487" fill="#1c4c1c"/>
<rect x="606" y="210" width="1" height="487" fill="#1c4c1c"/>
<rect x="611" y="210" width="1" height="487" fill="#1c4c1c"/>
<rect x="616" y="210" width="1" height="487" fill="#1c4c1c"/>
<rect x="621" y="210" width="1" height="487" fill="#4a804a"/>
<rect x="626" y="210" width="1" height="487" fill="#1c4c1c"/>
<rect x="630" y="210" width="1" height="487" fill="#1c4c1c"/>
<rect x="635" y="210" width="1" height="487" fill="#1c4c1c"/>
<rect x="640" y="210" width="1" height="487" fill="#1c4c1c"/>
<rect x="645" y="210" width="1" height="487" fill="#4a804a"/>
<rect x="650" y="210" width="1" height="487" fill="#1c4c1c"/>
<rect x="655" y="210" width="1" height="487" fill="#1c4c1c"/>
<rect x="660" y="210" width="1" height="487" fill="#1c4c1c"/>
<rect x="665" y="210" width="1" height="487" fill="#1c4c1c"/>
<rect x="670" y="210" width="1" height="487" fill="#4a804a"/>
<rect x="675" y="210" width="1" height="487" fill="#1c4c1c"/>
<rect x="680" y="210" width="1" height="487" fill="#1c4c1c"/>
<rect x="684" y="210" width="1" height="487" fill="#1c4c1c"/>
<rect x="689" y="210" width="1" height="487" fill="#1c4c1c"/>
<rect x="694" y="210" width="1" height="487" fill="#4a804a"/>
<rect x="699" y="210" width="1" height="487" fill="#1c4c1c"/>
<rect x="704" y="210" width="1" height="487" fill="#1c4c1c"/>
<rect x="709" y="210" width="1" height="487" fill="#1c4c1c"/>
<rect x="714" y="210" width="1" height="487" fill="#1c4c1c"/>
<rect x="719" y="210" width="1" height="487" fill="#4a804a"/>
<rect x="724" y="210" width="1" height="487" fill="#1c4c1c"/>
<rect x="729" y="210" width="1" height="487" fill="#1c4c1c"/>
<rect x="733" y="210" width="1" height="487" fill="#1c4c1c"/>
<rect x="738" y="210" width="1" height="487" fill="#1c4c1c"/>
<rect x="743" y="210" width="1" height="487" fill="#4a804a"/>
<rect x="748" y="210" width="1" height="487" fill="#1c4c1c"/>
<rect x="753" y="210" width="1" height="487" fill="#1c4c1c"/>
<rect x="758" y="210" width="1" height="487" fill="#1c4c1c"/>
<rect x="763" y="210" width="1" height="487" fill="#1c4c1c"/>
<rect x="768" y="210" width="1" height="487" fill="#4a804a"/>
<rect x="773" y="210" width="1" height="487" fill="#1c4c1c"/>
<rect x="778" y="210" width="1" height="487" fill="#1c4c1c"/>
<rect x="783" y="210" width="1" height="487" fill="#1c4c1c"/>
<rect x="787" y="210" width="1" height="487" fill="#1c4c1c"/>
<rect x="792" y="210" width="1" height="487" fill="#4a804a"/>
<rect x="797" y="210" width="1" height="487" fill="#1c4c1c"/>
<rect x="802" y="210" width="1" height="487" fill="#1c4c1c"/>
<rect x="807" y="210" width="1" height="487" fill="#1c4c1c"/>
<rect x="812" y="210" width="1" height="487" fill="#1c4c1c"/>
<rect x="817" y="210" width="1" height="487" fill="#4a804a"/>
<rect x="822" y="210" width="1" height="487" fill="#1c4c1c"/>
<rect x="827" y="210" width="1" height="487" fill="#1c4c1c"/>
<rect x="832" y="210" width="1" height="487" fill="#1c4c1c"/>
<rect x="837" y="210" width="1" height="487" fill="#1c4c1c"/>
<rect x="841" y="210" width="1" height="487" fill="#4a804a"/>
<rect x="846" y="210" width="1" height="487" fill="#1c4c1c"/>
<rect x="851" y="210" width="1" height="487" fill="#1c4c1c"/>
<rect x="856" y="210" width="1" height="487" fill="#1c4c1c"/>
<rect x="861" y="210" width="1" height="487" fill="#1c4c1c"/>
<rect x="866" y="210" width="1" height="487" fill="#4a804a"/>
<rect x="871" y="210" width="1" height="487" fill="#1c4c1c"/>
<rect x="876" y="210" width="1" height="487" fill="#1c4c1c"/>
<rect x="881" y="210" width="1" height="487" fill="#1c4c1c"/>
<rect x="886" y="210" width="1" height="487" fill="#1c4c1c"/>
<rect x="891" y="210" width="1" height="487" fill="#4a804a"/>
<rect x="895" y="210" width="1" height="487" fill="#1c4c1c"/>
<rect x="900" y="210" width="1" height="487" fill="#1c4c1c"/>
<rect x="905" y="210" width="1" height="487" fill="#1c4c1c"/>
<rect x="910" y="210" width="1" height="487" fill="#1c4c1c"/>
<rect x="915" y="210" width="1" height="487" fill="#4a804a"/>
<rect x="920" y="210" width="1" height="487" fill="#1c4c1c"/>
<rect x="925" y="210" width="1" height="487" fill="#1c4c1c"/>
<rect x="930" y="210" width="1" height="487" fill="#1c4c1c"/>
<rect x="935" y="210" width="1" height="487" fill="#1c4c1c"/>
<rect x="940" y="210" width="1" height="487" fill="#4a804a"/>
<rect x="945" y="210" width="1" height="487" fill="#1c4c1c"/>
<rect x="949" y="210" width="1" height="487" fill="#1c4c1c"/>
<rect x="954" y="210" width="1" height="487" fill="#1c4c1c"/>
<rect x="959" y="210" width="1" height="487" fill="#1c4c1c"/>
<rect x="964" y="210" width="1" height="487" fill="#6a8a6a"/>
</g></svg>
<!--/GRID-->
<div class="t" style="left:120px;top:214px;color:#f0f0f0">[</div>
<div class="t" style="left:132.8px;top:214px;color:#f0f0f0">]</div>
<div class="a" style="left:125px;top:220px;width:7px;height:2px;background:#f4f4f4"></div>
<div class="t" style="left:137.5px;top:214px;color:#f0f0f0;letter-spacing:0.1px">[평면도][2D 와이어프레임]</div>
<!-- viewcube -->
<svg style="left:1020px;top:215px" width="100" height="130">
 <circle cx="48.1" cy="48.8" r="36.4" fill="none" stroke="#2d2d2d" stroke-width="9.2"/>
 <rect x="30" y="30.8" width="36" height="36.1" fill="#a8a8a8"/>
 <rect x="37" y="37.8" width="22" height="22.1" fill="#9a9ca3"/>
 <rect x="24.3" y="109.3" width="47.4" height="17.5" rx="4.5" fill="#92959e" stroke="#7d8089" stroke-width="1"/>
 <polygon points="58.3,115.3 66.7,115.3 62.5,119.8" fill="#b8bbc2" stroke="#8a8d95" stroke-width="0.5"/>
</svg>
<div class="t" style="left:1055px;top:257px;font-size:8.5px;color:#2a2a2a;letter-spacing:-0.3px">평면도</div>
<div class="t" style="left:1062px;top:218px;font-size:12.5px;color:#c8c8c8;text-shadow:0 0 1px #000">북</div>
<div class="t" style="left:1101px;top:257px;font-size:12.5px;color:#c8c8c8;text-shadow:0 0 1px #000">동</div>
<div class="t" style="left:1062px;top:296px;font-size:12.5px;color:#c8c8c8;text-shadow:0 0 1px #000">남</div>
<div class="t" style="left:1023px;top:257px;font-size:12.5px;color:#c8c8c8;text-shadow:0 0 1px #000">서</div>
<div class="t" style="left:1048px;top:325px;font-size:11px;color:#4a4c52">WCS</div>
<!-- scrollbar marks -->
<div class="a" style="left:1134px;top:445px;width:2px;height:16px;background:#888"></div>
<div class="a" style="left:613px;top:708px;width:17px;height:2px;background:#808080"></div>
<!-- ===== DIALOG ===== -->
<div class="a" style="left:350px;top:267px;width:398px;height:199px;background:#f0f0f0;border-radius:7px;overflow:hidden">
 <div class="a" style="left:0;top:0;width:398px;height:31px;background:#4b4a48"></div>
</div>
<div class="t" style="left:360px;top:275.5px;color:#f6f6f6">사각 벽체</div>
<svg style="left:720px;top:270px" width="25" height="25"><path d="M7,6.8 L17,17 M17,6.8 L7,17" stroke="#f4f4f4" stroke-width="1.2"/></svg>
<div class="a" style="left:359px;top:307px;width:186px;height:151px;border:1px solid #d9d9d9;border-radius:2px"></div>
<div class="a" style="left:366px;top:300px;width:68px;height:14px;background:#f0f0f0"></div>
<div class="t" style="left:369px;top:299px;color:#000">그리는 방법</div>
<svg style="left:368px;top:321px" width="169" height="132">
 <rect x="0" y="0" width="168.2" height="131.7" fill="#000"/>
 <rect x="23.5" y="14.5" width="122" height="103" fill="none" stroke="#fff" stroke-width="1"/>
 <rect x="29.5" y="20.5" width="110" height="90" fill="none" stroke="#fff" stroke-width="1"/>
 <path d="M25.8,114.3 L142,17.5" stroke="#1ad0e0" stroke-width="1"/>
 <path d="M142,17.5 L122,23.5 M142,17.5 L132,35.5 M142,17.5 L125,19.5" stroke="#1ad0e0" stroke-width="1"/>
 <rect x="23.5" y="112" width="4" height="4" fill="none" stroke="#e02020" stroke-width="1.2"/>
 <rect x="140" y="15.5" width="4" height="4" fill="none" stroke="#e02020" stroke-width="1.2"/>
 <text x="150.5" y="27" font-family="Liberation Sans" font-size="16" fill="#fff">2</text>
 <text x="8.5" y="122" font-family="Liberation Sans" font-size="16" fill="#fff">1</text>
</svg>
<div class="t" style="left:553px;top:311px;color:#000">벽체 폭:</div>
<div class="a" style="left:605px;top:310px;width:136px;height:18px;background:#fff;border:1px solid #7a7a7a"></div>
<div class="a" style="left:607px;top:312px;width:19px;height:12px;background:#0078d7"></div>
<div class="t" style="left:606px;top:311px;color:#fff;font-size:11.5px;letter-spacing:-0.6px">200</div>
<div class="t" style="left:553px;top:341px;color:#000">벽체 높이:</div>
<div class="a" style="left:617px;top:340px;width:124px;height:18px;background:#fff;border:1px solid #7a7a7a"></div>
<div class="t" style="left:619px;top:341px;color:#000;font-size:11.5px;letter-spacing:-0.6px">2600</div>
<div class="t" style="left:553px;top:365px;color:#000">그려질 높이:</div>
<div class="a" style="left:629px;top:364px;width:112px;height:18px;background:#fff;border:1px solid #7a7a7a"></div>
<div class="t" style="left:631px;top:365px;color:#000;font-size:11.5px">0</div>
<svg style="left:550px;top:388px" width="130" height="20">
 <circle cx="9.6" cy="10.3" r="5.4" fill="#fff" stroke="#005fb8" stroke-width="3.2"/>
 <circle cx="9.6" cy="10.3" r="2" fill="#fff"/>
 <circle cx="116.4" cy="10.3" r="6" fill="#fff" stroke="#555" stroke-width="1"/>
</svg>
<div class="t" style="left:570px;top:391px;color:#000">교차점 선택</div>
<div class="t" style="left:676px;top:391px;color:#000">스냅 100</div>
<div class="a" style="left:678px;top:419px;width:61px;height:19px;background:#fdfdfd;border:1px solid #0067c0;border-radius:3px"></div>
<div class="t" style="left:698px;top:420px;color:#000">확인</div>
<div class="t" style="left:553px;top:430px;color:#000;font-size:12.3px">CYCAD FANTASMO</div>
<!-- ===== COMMAND LINE ===== -->
<svg style="left:0;top:715px" width="40" height="70">
 <g fill="#f4f4f4" shape-rendering="crispEdges"><rect x="8" y="11" width="2" height="2"/><rect x="8" y="14" width="2" height="2"/><rect x="11" y="11" width="2" height="2"/><rect x="11" y="14" width="2" height="2"/><rect x="14" y="11" width="2" height="2"/><rect x="14" y="14" width="2" height="2"/><rect x="17" y="11" width="2" height="2"/><rect x="17" y="14" width="2" height="2"/><rect x="20" y="11" width="2" height="2"/><rect x="20" y="14" width="2" height="2"/><rect x="23" y="11" width="2" height="2"/><rect x="23" y="14" width="2" height="2"/></g>
 <path d="M11.2,24.5 L20,33.5 M20,24.5 L11.2,33.5" stroke="#dcdcdc" stroke-width="1.5"/>
 <path d="M9.3,59.3 L17,51.5" stroke="#d8d8d8" stroke-width="2.6" stroke-linecap="round"/>
 <path d="M15.2,47.3 A4.6,4.6 0 0 0 21.7,53.5 L22.8,49.8 L20.6,51.3 L18.7,49.5 L20,47.2 L16.5,46.3 Z" fill="#d8d8d8"/>
</svg>
<div class="t" style="left:30.5px;top:726px;font-family:'Liberation Mono',monospace;color:#000;font-size:12.5px">모형 재생성 중.</div>
<div class="t" style="left:30.5px;top:741.5px;font-family:'Liberation Mono',monospace;color:#000;font-size:12.5px">명령: *취소*</div>
<svg style="left:30px;top:760px" width="40" height="20">
 <rect x="3.5" y="3.5" width="15" height="11" fill="#fff" stroke="#777" stroke-width="1"/>
 <rect x="3.5" y="3.5" width="15" height="2" fill="#777"/>
 <path d="M5.5,8 L7.5,9.5 L5.5,11 M8.5,11.5 H12" stroke="#444" stroke-width="0.8" fill="none"/>
 <polygon points="21.5,8 27.5,8 24.5,11.5" fill="#666"/>
</svg>
<div class="t" style="left:67px;top:761px;font-style:italic;color:#888;font-size:13px;word-spacing:4px">명령 입력</div>
<!-- ===== STATUS BAR ===== -->
<div class="a" style="left:1px;top:784px;width:1145px;height:32px;background:#222831;border-radius:0 0 6px 6px"></div>
<div class="a" style="left:29px;top:779px;width:1113px;height:1px;background:#222831"></div>
<div class="a" style="left:4px;top:780px;width:1139px;height:4px;background:#3b4453"></div>
<svg style="left:0;top:780px" width="300" height="36">
 <path d="M20,11 H36 M20,16 H36 M20,21 H36" stroke="#ececec" stroke-width="2"/>
 <polygon points="53,4 99,4 94,28 45,28" fill="#3b4453"/>
 <path d="M156.5,6.5 L149.7,23.5 M212,6.5 L205,23.5 M254,6.5 L247,23.5" stroke="#5a6270" stroke-width="1"/>
 <path d="M229,9 V23 M221.8,16 H236.3" stroke="#f0f0f0" stroke-width="1.8"/>
</svg>
<div class="t" style="left:62px;top:788px;color:#f0f0f0">모형</div>
<div class="t" style="left:110px;top:788px;color:#e0e0e0">배치1</div>
<div class="t" style="left:165px;top:788px;color:#e0e0e0">배치2</div>
<svg style="left:530px;top:780px" width="617" height="36">
 <g transform="translate(-530,-780)">
 <g fill="#3b4453">
  <rect x="542" y="786" width="27" height="24"/>
  <rect x="572.9" y="786" width="63.2" height="24"/>
  <rect x="638.9" y="786" width="104.3" height="24"/>
  <rect x="744.2" y="786" width="63.7" height="24"/>
  <rect x="811.2" y="786" width="105.6" height="24"/>
  <rect x="920" y="786" width="83" height="24"/>
  <rect x="1004.1" y="786" width="23.9" height="24"/>
  <rect x="1030.8" y="786" width="24.2" height="24"/>
  <rect x="1058" y="786" width="29.9" height="24"/>
  <rect x="1091" y="786" width="23.8" height="24"/>
  <rect x="1117" y="786" width="23.8" height="24"/>
 </g>
 <g fill="#6090c2">
  <rect x="573" y="787" width="21.7" height="22"/>
  <rect x="597" y="787" width="22" height="22"/>
  <rect x="640" y="787" width="22" height="22"/>
  <rect x="744.7" y="787" width="22.3" height="22"/>
  <rect x="811.8" y="787" width="22.2" height="22"/>
 </g>
 <g fill="#c8ccd2">
  <polygon points="624,796 632,796 628,800.3"/>
  <polygon points="690.9,796 698.7,796 694.8,800.3"/>
  <polygon points="731.1,796 739,796 735,800.3"/>
  <polygon points="796.1,796 804,796 800,800.3"/>
  <polygon points="905,796 913,796 909,800.3"/>
  <polygon points="990,796 998,796 994,800.3"/>
 </g>
 <!-- grid icon -->
 <path d="M575.5,793.5 H592.5 M575.5,798 H592.5 M575.5,802.5 H592.5 M579.5,790 V806 M584,790 V806 M588.5,790 V806" stroke="#fff" stroke-width="1.2"/>
 <g fill="#fff"><rect x="602.0" y="792.0" width="2" height="2"/><rect x="602.0" y="796.5" width="2" height="2"/><rect x="602.0" y="801.0" width="2" height="2"/><rect x="606.3" y="792.0" width="2" height="2"/><rect x="606.3" y="796.5" width="2" height="2"/><rect x="606.3" y="801.0" width="2" height="2"/><rect x="610.6" y="792.0" width="2" height="2"/><rect x="610.6" y="796.5" width="2" height="2"/><rect x="610.6" y="801.0" width="2" height="2"/></g>
 <path d="M643.4,790.4 V805.6 H659 M643.4,800 H648.7 V805.6" stroke="#fff" stroke-width="1.2" fill="none"/>
 <circle cx="673.5" cy="798.3" r="6.5" fill="none" stroke="#ddd" stroke-width="1.1"/>
 <path d="M673,798.3 H682.8 M673,798.3 L680.9,791.1" stroke="#ddd" stroke-width="1.1"/>
 <path d="M714.4,790.2 V804.8" stroke="#40d060" stroke-width="1.1"/>
 <path d="M708.1,791.1 L720.9,804.2" stroke="#e04040" stroke-width="1.1"/>
 <rect x="712.9" y="795.8" width="3" height="3" fill="#3b4453" stroke="#fff" stroke-width="0.9"/>
 <path d="M748.4,803.8 H764 M748.4,803.8 L760.2,792" stroke="#fff" stroke-width="1.2"/>
 <rect x="753.3" y="795.8" width="3" height="3" fill="#fff"/>
 <rect x="774.3" y="792.4" width="13.6" height="13.1" fill="none" stroke="#ddd" stroke-width="1.1"/>
 <rect x="771.9" y="790.5" width="5" height="4.5" fill="#3b4453" stroke="#f0a060" stroke-width="1.1"/>
 <!-- annotation icons -->
 <path d="M822.1,790 C823.1,793 824.4,795 823.9,797 L829.3000000000001,805.8 L822.1,802.3 L814.9,805.8 L820.3000000000001,797 C819.8000000000001,795 821.1,793 822.1,790Z" fill="#fff"/>
 <circle cx="827.8" cy="793.8" r="2.5" fill="none" stroke="#fff" stroke-width="1.1"/>
 <path d="M845.9,790 C846.9,793 848.1999999999999,795 847.6999999999999,797 L853.1,805.8 L845.9,802.3 L838.6999999999999,805.8 L844.1,797 C843.6,795 844.9,793 845.9,790Z" fill="#d8d8d8"/>
 <polygon points="853.5,789.8 849.5,794.8 851.8,794.8 849.8,798.2 854.5,793.2 852.2,793.2" fill="#d8d8d8"/>
 <path d="M870.8,790 C871.8,793 873.0999999999999,795 872.5999999999999,797 L878.0,805.8 L870.8,802.3 L863.5999999999999,805.8 L869.0,797 C868.5,795 869.8,793 870.8,790Z" fill="#d8d8d8"/>
 <!-- gear -->
 <g transform="translate(931.4,798.2)">
  <circle r="5.4" fill="none" stroke="#d8d8d8" stroke-width="3"/>
  <g fill="#d8d8d8"><rect x="-1.6" y="-8" width="3.2" height="3.2" transform="rotate(0)"/><rect x="-1.6" y="-8" width="3.2" height="3.2" transform="rotate(45)"/><rect x="-1.6" y="-8" width="3.2" height="3.2" transform="rotate(90)"/><rect x="-1.6" y="-8" width="3.2" height="3.2" transform="rotate(135)"/><rect x="-1.6" y="-8" width="3.2" height="3.2" transform="rotate(180)"/><rect x="-1.6" y="-8" width="3.2" height="3.2" transform="rotate(225)"/><rect x="-1.6" y="-8" width="3.2" height="3.2" transform="rotate(270)"/><rect x="-1.6" y="-8" width="3.2" height="3.2" transform="rotate(315)"/></g>
 </g>
 <path d="M1016,790 V806 M1008,798 H1024" stroke="#e6e6e6" stroke-width="1.6"/>
 <rect x="1035.5" y="790.5" width="6" height="6" fill="none" stroke="#ddd" stroke-width="1"/>
 <circle cx="1048" cy="796.5" r="3" fill="none" stroke="#ddd" stroke-width="1"/>
 <polygon points="1041.5,800 1045,806 1038,806" fill="none" stroke="#ddd" stroke-width="1"/>
 <rect x="1064.5" y="790" width="17" height="14" fill="#d8d8d8"/>
 <path d="M1065.5,802 C1067,794 1069,792 1070.5,794 C1072,797 1074,802 1076,801 C1078,799 1079,795 1080.5,794" stroke="#555" stroke-width="0.8" fill="none"/>
 <circle cx="1070" cy="792.5" r="1.2" fill="#40a0f0"/>
 <polygon points="1077,799 1082,807.5 1072,807.5" fill="#f0a060"/>
 <path d="M1077,801.5 V804.5" stroke="#fff" stroke-width="0.8"/>
 <rect x="1095.5" y="792.5" width="15" height="11" fill="none" stroke="#ddd" stroke-width="1.1"/>
 <path d="M1099,801 L1102,798 M1107,795 L1104,798" stroke="#ddd" stroke-width="1"/>
 <polygon points="1098.5,797.5 1098.5,801.5 1102.5,801.5" fill="#ddd"/>
 <polygon points="1107.5,794.5 1103.5,794.5 1107.5,798.5" fill="#ddd"/>
 <path d="M1121,792 H1137 M1121,798 H1137 M1121,804 H1137" stroke="#ececec" stroke-width="2"/>
 </g>
</svg>
<div class="t" style="left:545px;top:791px;color:#f0f0f0">모형</div>
<div class="t" style="left:888px;top:791px;color:#e6e6e6;letter-spacing:-0.6px">1:1</div>
<div class="t" style="left:949px;top:791px;color:#e6e6e6;font-size:12.2px;letter-spacing:-0.5px">CYCAD</div>
<!--PAL-->
<svg style="left:0;top:0" width="120" height="620">
<rect x="4.5" y="207.5" width="24" height="404" fill="#3b4453" stroke="#262c35" stroke-width="1" shape-rendering="crispEdges"/>
<rect x="8" y="210" width="1" height="1" fill="#f0f0f0"/>
<rect x="8" y="212" width="1" height="1" fill="#f0f0f0"/>
<rect x="10" y="210" width="1" height="1" fill="#f0f0f0"/>
<rect x="10" y="212" width="1" height="1" fill="#f0f0f0"/>
<rect x="12" y="210" width="1" height="1" fill="#f0f0f0"/>
<rect x="12" y="212" width="1" height="1" fill="#f0f0f0"/>
<rect x="14" y="210" width="1" height="1" fill="#f0f0f0"/>
<rect x="14" y="212" width="1" height="1" fill="#f0f0f0"/>
<rect x="16" y="210" width="1" height="1" fill="#f0f0f0"/>
<rect x="16" y="212" width="1" height="1" fill="#f0f0f0"/>
<rect x="18" y="210" width="1" height="1" fill="#f0f0f0"/>
<rect x="18" y="212" width="1" height="1" fill="#f0f0f0"/>
<rect x="20" y="210" width="1" height="1" fill="#f0f0f0"/>
<rect x="20" y="212" width="1" height="1" fill="#f0f0f0"/>
<rect x="32.5" y="207.5" width="24" height="404" fill="#3b4453" stroke="#262c35" stroke-width="1" shape-rendering="crispEdges"/>
<rect x="36" y="210" width="1" height="1" fill="#f0f0f0"/>
<rect x="36" y="212" width="1" height="1" fill="#f0f0f0"/>
<rect x="38" y="210" width="1" height="1" fill="#f0f0f0"/>
<rect x="38" y="212" width="1" height="1" fill="#f0f0f0"/>
<rect x="40" y="210" width="1" height="1" fill="#f0f0f0"/>
<rect x="40" y="212" width="1" height="1" fill="#f0f0f0"/>
<rect x="42" y="210" width="1" height="1" fill="#f0f0f0"/>
<rect x="42" y="212" width="1" height="1" fill="#f0f0f0"/>
<rect x="44" y="210" width="1" height="1" fill="#f0f0f0"/>
<rect x="44" y="212" width="1" height="1" fill="#f0f0f0"/>
<rect x="46" y="210" width="1" height="1" fill="#f0f0f0"/>
<rect x="46" y="212" width="1" height="1" fill="#f0f0f0"/>
<rect x="48" y="210" width="1" height="1" fill="#f0f0f0"/>
<rect x="48" y="212" width="1" height="1" fill="#f0f0f0"/>
<rect x="60.5" y="207.5" width="24" height="404" fill="#3b4453" stroke="#262c35" stroke-width="1" shape-rendering="crispEdges"/>
<rect x="64" y="210" width="1" height="1" fill="#f0f0f0"/>
<rect x="64" y="212" width="1" height="1" fill="#f0f0f0"/>
<rect x="66" y="210" width="1" height="1" fill="#f0f0f0"/>
<rect x="66" y="212" width="1" height="1" fill="#f0f0f0"/>
<rect x="68" y="210" width="1" height="1" fill="#f0f0f0"/>
<rect x="68" y="212" width="1" height="1" fill="#f0f0f0"/>
<rect x="70" y="210" width="1" height="1" fill="#f0f0f0"/>
<rect x="70" y="212" width="1" height="1" fill="#f0f0f0"/>
<rect x="72" y="210" width="1" height="1" fill="#f0f0f0"/>
<rect x="72" y="212" width="1" height="1" fill="#f0f0f0"/>
<rect x="74" y="210" width="1" height="1" fill="#f0f0f0"/>
<rect x="74" y="212" width="1" height="1" fill="#f0f0f0"/>
<rect x="76" y="210" width="1" height="1" fill="#f0f0f0"/>
<rect x="76" y="212" width="1" height="1" fill="#f0f0f0"/>
<rect x="88.5" y="207.5" width="24" height="404" fill="#3b4453" stroke="#262c35" stroke-width="1" shape-rendering="crispEdges"/>
<rect x="92" y="210" width="1" height="1" fill="#f0f0f0"/>
<rect x="92" y="212" width="1" height="1" fill="#f0f0f0"/>
<rect x="94" y="210" width="1" height="1" fill="#f0f0f0"/>
<rect x="94" y="212" width="1" height="1" fill="#f0f0f0"/>
<rect x="96" y="210" width="1" height="1" fill="#f0f0f0"/>
<rect x="96" y="212" width="1" height="1" fill="#f0f0f0"/>
<rect x="98" y="210" width="1" height="1" fill="#f0f0f0"/>
<rect x="98" y="212" width="1" height="1" fill="#f0f0f0"/>
<rect x="100" y="210" width="1" height="1" fill="#f0f0f0"/>
<rect x="100" y="212" width="1" height="1" fill="#f0f0f0"/>
<rect x="102" y="210" width="1" height="1" fill="#f0f0f0"/>
<rect x="102" y="212" width="1" height="1" fill="#f0f0f0"/>
<rect x="104" y="210" width="1" height="1" fill="#f0f0f0"/>
<rect x="104" y="212" width="1" height="1" fill="#f0f0f0"/>
<g transform="translate(7.90,218.80)"><path d="M9,3.2 H4.4 L2,8 L4.4,12.6" fill="none" stroke="#e02020" stroke-width="2.3"/>
<path d="M9.6,3.3 L12,8 L9.6,12.6 H5" stroke="#1a1ab0" stroke-width="2.3" fill="none"/><rect x="12" y="6.8" width="4" height="2.4" fill="#1a1ab0"/>
<circle cx="7.3" cy="8" r="2.3" fill="#30d040"/></g>
<g transform="translate(7.90,240.77)"><rect x="2.8" y="1.8" width="11.8" height="11.6" fill="none" stroke="#1aa4dc" stroke-width="1.6"/><path d="M8.7,1.8V13.4M2.8,7.6H14.6" stroke="#1aa4dc" stroke-width="1.4"/><path d="M1.3,10.5 V14.5 H5" stroke="#e03a20" stroke-width="1.4" fill="none"/></g>
<g transform="translate(7.90,262.74)"><path d="M0.5,0.8 H15.5 M6.5,8 H15.5 M0.5,15 H15.5 M3,0.8 V15 M8,0.8 V15" stroke="#1aa4dc" stroke-width="1.1" fill="none"/>
<g fill="#1aa4dc"><polygon points="1.4,3 3,0.8 4.6,3"/><polygon points="1.4,12.8 3,15 4.6,12.8"/><polygon points="6.4,3 8,0.8 9.6,3"/><polygon points="6.4,5.8 8,8 9.6,5.8"/><polygon points="6.4,10.2 8,8 9.6,10.2"/><polygon points="6.4,12.8 8,15 9.6,12.8"/></g></g>
<g transform="translate(7.90,284.71)"><circle cx="4" cy="12.4" r="3" fill="#1aa4dc"/><circle cx="12.3" cy="3.7" r="2.8" fill="#1aa4dc"/><path d="M6.8,9.4 L9.3,6.9" stroke="#1aa4dc" stroke-width="1"/><path d="M7.8,6.8 H9.5 V8.5" stroke="#1aa4dc" stroke-width="0.9" fill="none"/><path d="M3,13.5 L4.8,11.7 M11.3,4.7 L13,3" stroke="#fff" stroke-width="0.6"/></g>
<g transform="translate(7.90,306.68)"><path d="M3.5,3.5 H6.8 L8.4,7.5 L6.8,11.5 H3.5 L1.8,7.5Z" fill="none" stroke="#1aa4dc" stroke-width="1.1"/><rect x="1.8" y="7" width="14" height="1.2" fill="#1aa4dc"/>
<path d="M9.5,5 H15.5 M9.5,10 H15.5" stroke="#1aa4dc" stroke-width="1" stroke-dasharray="1.2,0.8"/></g>
<g transform="translate(7.90,328.65)"><rect x="0.5" y="1" width="15.5" height="14.5" fill="#000"/><rect x="1.7" y="2.2" width="13.1" height="12.1" fill="#fff"/><rect x="3.6" y="4.1" width="9.3" height="8.3" fill="#000"/><rect x="4.6" y="5.1" width="7.3" height="6.3" fill="#3b4453"/>
<rect x="12.8" y="2.2" width="2" height="2" fill="#f00"/><rect x="1.7" y="12.3" width="2" height="2" fill="#f00"/></g>
<g transform="translate(7.90,350.62)"><path d="M2.3,1.2 V8.5 H13.7 V15.2" fill="none" stroke="#000" stroke-width="4.2" stroke-linecap="square"/><path d="M2.3,1.5 V8.5 H13.7 V14.5" fill="none" stroke="#fff" stroke-width="2"/>
<g fill="#f00"><rect x="1.3" y="1.5" width="2" height="2"/><rect x="1.3" y="7.5" width="2" height="2"/><rect x="12.7" y="7.5" width="2" height="2"/><rect x="12.7" y="13" width="2" height="2"/></g></g>
<g transform="translate(7.90,372.59)"><rect x="0.5" y="1" width="15.5" height="13.5" fill="#000"/><rect x="1.6" y="2.1" width="13.3" height="11.3" fill="#fff"/><rect x="3.5" y="4" width="9.5" height="9.5" fill="#000"/><rect x="4.5" y="5" width="7.5" height="10" fill="#3b4453"/>
<rect x="5.2" y="10.5" width="6.2" height="5.3" fill="none" stroke="#f00" stroke-width="1.1"/></g>
<g transform="translate(7.90,394.56)"><rect x="0.8" y="0.5" width="15" height="15" rx="1.5" fill="#000"/><rect x="2" y="1.7" width="12.6" height="12.6" fill="#fff"/><path d="M4.3,4 V12 M12.3,4 V12" stroke="#000" stroke-width="1.3"/><rect x="5.5" y="5" width="5.5" height="1.6" fill="#000"/><rect x="5.5" y="9.2" width="5.5" height="1.6" fill="#000"/><rect x="4.3" y="6.6" width="1.3" height="2.6" fill="#000"/>
<rect x="7.6" y="0.8" width="1.4" height="2.6" fill="#b00"/><rect x="12.3" y="7" width="1.3" height="2" fill="#f00"/><rect x="7.6" y="12.6" width="1.4" height="2.6" fill="#b00"/></g>
<g transform="translate(7.90,416.53)"><path d="M5.8,2 H2.5 V14 H5.8 M10.8,2 H14.1 V14 H10.8" stroke="#000" stroke-width="3.6" fill="none" stroke-linejoin="round"/><path d="M5.5,2 H2.5 V14 H5.5 M11,2 H14.1 V14 H11" stroke="#fff" stroke-width="1.8" fill="none"/></g>
<g transform="translate(7.90,438.50)"><path d="M14.5,1.5 L16,3.5 L8,11.5 L6,10Z" fill="#f2c27a"/><circle cx="5.5" cy="11.5" r="2.1" fill="#e85060"/><path d="M0.5,14.5 H3 M6,14.5 H15.5" stroke="#8ccff5" stroke-width="1"/><path d="M0.5,14.5 H3" stroke="#ddd" stroke-width="1"/></g>
<g transform="translate(7.90,460.47)"><path d="M8,1 V15 M1,8 H15" stroke="#fff" stroke-width="1.4"/><g fill="#fff"><polygon points="5.2,3.8 8,0.5 10.8,3.8"/><polygon points="5.2,12.2 8,15.5 10.8,12.2"/><polygon points="3.8,5.2 0.5,8 3.8,10.8"/><polygon points="12.2,5.2 15.5,8 12.2,10.8"/></g></g>
<g transform="translate(7.90,482.44)"><circle cx="3.5" cy="3.5" r="2.5" fill="none" stroke="#ddd" stroke-width="1"/><path d="M7,2.5 H11 V6.5" stroke="#fff" stroke-width="1.1" fill="none"/><polygon points="9.3,5.5 11,8 12.7,5.5" fill="#fff"/>
<circle cx="6.8" cy="12" r="2.8" fill="none" stroke="#8ccff5" stroke-width="1.1"/><circle cx="12.3" cy="12" r="2.8" fill="none" stroke="#8ccff5" stroke-width="1.1"/></g>
<g transform="translate(7.90,504.41)"><polygon points="7,1.5 7,14.5 1,14.5" fill="none" stroke="#ddd" stroke-width="1.1"/><polygon points="9,1.5 9,14.5 15,14.5" fill="none" stroke="#8ccff5" stroke-width="1.1"/></g>
<g transform="translate(7.90,526.38)"><path d="M1,15.5 V12" stroke="#ddd" stroke-width="1.1"/><path d="M1,10 C1,5 4,1.5 9,1.5" stroke="#8ccff5" stroke-width="1.2" fill="none"/><path d="M10,1.5 H15.5" stroke="#ddd" stroke-width="1.1"/></g>
<g transform="translate(7.90,548.35)"><path d="M11,2.8 A6.3,6.3 0 1 1 4,3.5" stroke="#eee" stroke-width="1.2" fill="none" transform="rotate(20 8 9)"/><polygon points="8.5,0 12.5,2.8 8.5,5.5" fill="#fff"/></g>
<g transform="translate(7.90,570.32)"><rect x="1.5" y="1.5" width="14" height="13" fill="none" stroke="#e01010" stroke-width="1.2"/><text x="8.5" y="11.5" font-family="Liberation Sans" font-size="8" fill="#e01010" text-anchor="middle">P</text><circle cx="15" cy="2" r="1.3" fill="#30e030"/><circle cx="2" cy="14" r="1.3" fill="#30e030"/></g>
<g transform="translate(7.90,592.29)"><rect x="1.5" y="1.5" width="13" height="13" fill="none" stroke="#e01010" stroke-width="1.2"/><text x="7.5" y="11.5" font-family="Liberation Sans" font-size="8" fill="#e01010" text-anchor="middle">P</text><circle cx="14.5" cy="8" r="1.9" fill="#30e030"/></g>
<g transform="translate(36.30,218.80)"><path d="M2,10 H4 M5.5,10 H10.5" stroke="#ddd" stroke-width="1.1"/><path d="M11,3.5 C14,3.5 15.5,5 15.5,7 C15.5,9 14,10 11.5,10" stroke="#ddd" stroke-width="1.1" fill="none"/>
<g fill="#8ccff5"><rect x="0.8" y="9" width="2" height="2"/><rect x="10" y="9" width="2" height="2"/><rect x="10" y="2.5" width="2" height="2"/></g></g>
<g transform="translate(36.30,240.77)"><circle cx="8" cy="8.5" r="7" fill="none" stroke="#ddd" stroke-width="1.1"/><path d="M8,6 V11 M5.5,8.5 H10.5" stroke="#8ccff5" stroke-width="1.1"/></g>
<g transform="translate(36.30,262.74)"><polygon points="8,1.5 14.5,6.2 12,14 4,14 1.5,6.2" fill="none" stroke="#ddd" stroke-width="1.1"/><rect x="7" y="7" width="1.8" height="1.8" fill="#8ccff5"/><rect x="11.5" y="13" width="2" height="2" fill="#8ccff5"/></g>
<g transform="translate(36.30,284.71)"><polygon points="0.5,3.5 3,1 11,1 11,12 8.5,14.5 0.5,14.5" fill="#bfe0f8"/><polygon points="0.5,3.5 8.5,3.5 8.5,14.5 0.5,14.5" fill="#8fcaf0"/><polygon points="0.5,13.5 11,13.5 8.5,16 0.5,16" fill="#eee"/><path d="M13.5,14 V2.5" stroke="#fff" stroke-width="1"/><polygon points="12,4 13.5,1 15,4" fill="#fff"/></g>
<g transform="translate(36.30,306.68)"><path d="M1,7 C5,3 11,3 15,7 V12 C11,9 5,9 1,12Z" fill="#8fcaf0"/><path d="M1,12 C5,9 11,9 12,10 V15 C8,13 4,13 1,15Z" fill="#a8d8f8"/><polygon points="12,10 15,7 15,12 12,15" fill="#e0e0e0"/><path d="M1.5,4.5 C5,1 11,1 14.5,4.5" stroke="#ddd" stroke-width="1" fill="none"/></g>
<g transform="translate(36.30,328.65)"><polygon points="1,5 3,2.5 9,2.5 9,5 15,5 15,12 13,14 1,11" fill="#8fcaf0"/><polygon points="1,5 9,5 9,8 13,8 13,11 1,11" fill="#bfe0f8"/><rect x="5" y="8.5" width="8" height="7.5" fill="#d8d8d8" stroke="#888" stroke-width="0.5"/></g>
<g transform="translate(36.30,350.62)"><polygon points="1,1 15,1 15,10 1,10" fill="#8fcaf0"/><polygon points="1,1 15,1 8,10" fill="#bfe0f8"/><circle cx="8" cy="12" r="4" fill="#d8d8d8" stroke="#888" stroke-width="0.5"/></g>
<g transform="translate(36.30,372.59)"><polygon points="1,7 14,4.5 16,5 3,7.5" fill="#bbb"/><polygon points="1,7 14,4.5 14,9.5 1,12" fill="#d8d8d8"/></g>
<g transform="translate(36.30,394.56)"><polygon points="3,6.5 6,3.5 6,12.5 3,15.5 0.5,15.5 0.5,9" fill="#8fcaf0"/><polygon points="5,3 8,0.5 15.5,0.5 15.5,8.5 13,11 5,11" fill="#d8d8d8"/><polygon points="5,3 13,3 13,11 5,11" fill="#e8e8e8"/></g>
<g transform="translate(36.30,416.53)"><polygon points="0.5,7.5 3,5 8,5 8,2.5 10.5,0 15.5,0 15.5,7 13,9.5 8,9.5 8,12 5.5,14.5 0.5,14.5" fill="#8fcaf0"/><polygon points="0.5,7.5 8,7.5 8,14.5 0.5,14.5" fill="#7ec0ea"/></g>
<g transform="translate(36.30,438.50)"><polygon points="0.5,6 3,3.5 8,3.5 8,14.5 0.5,14.5" fill="#d8d8d8"/><polygon points="5,2.5 7.5,0 15.5,0 15.5,8 13,10.5 5,10.5" fill="#e0e0e0"/><rect x="5.5" y="6" width="4" height="4" fill="#8fcaf0"/></g>
<g transform="translate(36.30,460.47)"><path d="M3,1.5 L10,9 M1,6 L11,10" stroke="#5a8ae0" stroke-width="1.1"/><circle cx="13" cy="10" r="2" fill="none" stroke="#5a8ae0" stroke-width="1"/><circle cx="8" cy="14" r="1.8" fill="none" stroke="#5a8ae0" stroke-width="1"/><path d="M8,12 L9,9" stroke="#5a8ae0" stroke-width="1"/></g>
<g transform="translate(36.30,482.44)"><circle cx="6.5" cy="10.5" r="4.6" fill="#e80a0a"/><path d="M6.5,6 C7,3 9,2 11,2.5" stroke="#ccc" stroke-width="1" fill="none"/><circle cx="12" cy="2.5" r="1.5" fill="#f09040"/></g>
<g transform="translate(36.30,504.41)"><rect x="1" y="5" width="10.5" height="10.5" rx="1" fill="#fff" stroke="#000" stroke-width="1.2"/><rect x="7" y="1" width="8.5" height="8.5" fill="none" stroke="#e01010" stroke-width="1.2" stroke-dasharray="2,1.3"/></g>
<g transform="translate(36.30,526.38)"><path d="M3.5,6.5 H12 M0.5,10 H12" stroke="#fff" stroke-width="1.1"/><path d="M0.5,10 H12" stroke="#8ccff5" stroke-width="1.1" stroke-dasharray="2,1"/><polygon points="10,4 13,6.5 10,9" fill="#fff"/><path d="M14.5,1 V15" stroke="#ddd" stroke-width="1.1"/></g>
<g transform="translate(36.30,548.35)"><path d="M0.5,8 H4.5" stroke="#aaa" stroke-width="1.6"/><path d="M9,8 H15.5" stroke="#1aa4dc" stroke-width="1.1" stroke-dasharray="1.5,1.2"/><path d="M10.5,0.5 L5,15.5" stroke="#1a8ae0" stroke-width="1.1"/></g>
<g transform="translate(36.30,570.32)"><rect x="0.8" y="6.5" width="2.5" height="2.5" fill="none" stroke="#ddd" stroke-width="0.9"/><path d="M3.5,7.8 H11" stroke="#ddd" stroke-width="1"/><rect x="11" y="6" width="4" height="4" fill="none" stroke="#f0b88a" stroke-width="1"/></g>
<g transform="translate(36.30,592.29)"><rect x="0.5" y="0.5" width="15" height="15.5" fill="#d8d8d8"/><rect x="0.5" y="0.5" width="15" height="1" fill="#666"/><rect x="0.5" y="2" width="15" height="3.2" fill="#222"/><rect x="1.3" y="2.5" width="2.8" height="2.2" fill="#fff"/><rect x="5.8" y="2.5" width="3.5" height="2.2" fill="#fff"/><rect x="10.8" y="2.5" width="4" height="2.2" fill="#fff"/><rect x="4" y="5.2" width="11.5" height="8.8" fill="#000"/><rect x="0.5" y="5.2" width="3.5" height="8.8" fill="#9a9a9a"/></g>
<g transform="translate(63.60,218.80)"><rect x="2.8" y="1.2" width="12" height="11.8" fill="none" stroke="#1aa4dc" stroke-width="1.6"/><path d="M8.8,1.2V13M2.8,7.1H14.8" stroke="#1aa4dc" stroke-width="1.4"/><path d="M1.5,10.5 V14.5 H5" stroke="#e03a20" stroke-width="1.3" fill="none"/></g>
<g transform="translate(63.60,240.77)"><rect x="3.8" y="0.5" width="9.3" height="7.5" fill="#000"/><rect x="5.5" y="2" width="5.8" height="4.5" fill="#f00"/><polygon points="5.3,12.5 8.4,9.3 11.5,12.5" fill="#000"/><rect x="7.3" y="12" width="2.2" height="3.5" fill="#000"/></g>
<g transform="translate(63.60,262.74)"><rect x="7.5" y="3" width="8" height="8" fill="#000"/><rect x="9" y="4.6" width="5" height="4.8" fill="#f00"/><path d="M0,7 H5" stroke="#000" stroke-width="1.8"/><polygon points="3.5,3.5 7,7 3.5,10.5" fill="#000"/></g>
<g transform="translate(63.60,284.71)"><rect x="0.5" y="3" width="8" height="8" fill="#000"/><rect x="2" y="4.6" width="5" height="4.8" fill="#f00"/><path d="M11,7 H16" stroke="#000" stroke-width="1.8"/><polygon points="12.5,3.5 9,7 12.5,10.5" fill="#000"/></g>
<g transform="translate(63.60,306.68)"><rect x="7.2" y="0" width="2.2" height="4" fill="#000"/><polygon points="5,3.5 8.3,7 11.6,3.5" fill="#000"/><rect x="4" y="7.5" width="9" height="7.8" fill="#000"/><rect x="5.5" y="9" width="5.8" height="4.6" fill="#f00"/></g>
<g transform="translate(63.60,328.65)"><polygon points="5,4 7,1.5 14,1.5 14,9 12,11 5,11" fill="#000"/><polygon points="6.3,3 7.8,2.3 13.3,2.3 13.3,8.5 12,9.7" fill="#fff"/><rect x="6" y="3.8" width="6" height="6" fill="#0000f0"/><rect x="0.8" y="10.8" width="4" height="4" fill="#000"/><rect x="1.8" y="11.8" width="2" height="2" fill="#f00"/></g>
<g transform="translate(63.60,350.62)"><polygon points="0.5,5 4.5,1 7,1 7,10.5 3,14.5 0.5,14.5" fill="#000"/><polygon points="1.5,5.5 5,2 5.8,3 2.5,6.5 2.5,13.8 1.5,13.8" fill="#fff"/><polygon points="3,6.5 6.3,3 6.3,10 3,13.5" fill="#0000f0"/><rect x="9.5" y="9.5" width="5" height="5" fill="#000"/><rect x="11" y="11" width="2" height="2" fill="#f00"/></g>
<g transform="translate(63.60,372.59)"><rect x="0.8" y="0.5" width="4" height="4" fill="#000"/><rect x="1.5" y="1.2" width="2.6" height="2.6" fill="#f00"/><polygon points="6,7 10,3 12.5,3 12.5,12.5 8.5,16 6,16" fill="#000"/><polygon points="7,7.5 10.5,4 11.3,5 8,8.5 8,15.3 7,15.3" fill="#fff"/><polygon points="8.5,8.5 11.8,5 11.8,12 8.5,15" fill="#0000f0"/></g>
<g transform="translate(63.60,394.56)"><polygon points="0.5,2.5 4,6 4,14.5 0.5,14.5" fill="#000"/><polygon points="1.5,1.5 5,5 8,14.5 1.5,14.5" fill="#000"/><polygon points="1.5,2.8 4.5,6 7.3,13.8 5,13.8 2,6" fill="#fff"/><polygon points="1.5,6 4,8.5 6.5,13 1.5,13" fill="#0000f0"/><rect x="11" y="0.5" width="3.5" height="3.5" fill="#f00"/></g>
<g transform="translate(63.60,416.53)"><path d="M9,13 H0.8 V0.8 H13 V8" stroke="#ddd" stroke-width="1" fill="none"/><circle cx="11" cy="11" r="2.6" fill="none" stroke="#ddd" stroke-width="1"/><path d="M13,13 L15.5,15.5" stroke="#d8b070" stroke-width="1.2"/></g>
<g transform="translate(63.60,438.50)"><path d="M0.8,0.5 V15.5 M15.5,0.5 V15.5 M0.8,3 H15.5" stroke="#ddd" stroke-width="1"/><polygon points="9.5,6.5 6,11 8.5,11 6.5,15 11.5,9.5 9,9.5 10.5,6.5" fill="#f0c050"/></g>
<g transform="translate(63.60,460.47)"><path d="M0.5,7.5 V14 M15.5,7.5 V14 M0.5,8.5 H15.5" stroke="#2a5a30" stroke-width="1.2"/><rect x="5" y="6" width="6" height="2" fill="#2a5a30"/></g>
<g transform="translate(63.60,482.44)"><ellipse cx="8" cy="8" rx="3.8" ry="7" fill="none" stroke="#ddd" stroke-width="1" transform="rotate(-30 8 8)"/><path d="M4,3.5 C0,5 0,11 4,12.5 M12,3.5 C16,5 16,11 12,12.5" stroke="#ddd" stroke-width="1" fill="none"/><path d="M6.5,8 H9.5 M8,6.5 V9.5" stroke="#8ccff5" stroke-width="1"/></g>
<g transform="translate(63.60,504.41)"><defs><radialGradient id="sph" cx="0.4" cy="0.35" r="0.7"><stop offset="0" stop-color="#fff"/><stop offset="1" stop-color="#b0b0b0"/></radialGradient></defs><circle cx="8" cy="7" r="6" fill="url(#sph)"/><path d="M1,15 H15" stroke="#555" stroke-width="1"/></g>
<g transform="translate(63.60,526.38)"><path d="M0.8,5 L4.5,1.3 H15.3 V11.3 L11.5,15.2 H0.8Z M0.8,5 H11.5 V15.2 M11.5,5 L15.3,1.3" stroke="#8ccff5" stroke-width="1.4" fill="none"/><path d="M2,13.5 L6.5,9 L9,10.5 M6.5,9 V6" stroke="#ddd" stroke-width="0.8" fill="none"/></g>
<g transform="translate(63.60,548.35)"><polygon points="0.5,6 5,6 7,3 10,3 12,6 15.5,6 15.5,14 0.5,14" fill="#000"/><circle cx="7.5" cy="9.5" r="3" fill="#fff"/><circle cx="7.5" cy="9.5" r="2" fill="#00207a"/><path d="M4.5,4.5 L6,2.5" stroke="#1aa4a0" stroke-width="0.8"/></g>
<g transform="translate(63.60,570.32)"><polygon points="0.5,8 8,5 15.5,8 15.5,13 8,16 0.5,13" fill="#d8d8d8"/><polygon points="8,11 15.5,8 15.5,13 8,16" fill="#c4c4c4"/><polygon points="0.5,8 8,5 15.5,8 8,11" fill="#ececec"/><rect x="4.5" y="2.5" width="7" height="5" fill="#8fcaf0"/><ellipse cx="8" cy="2.5" rx="3.5" ry="1.8" fill="#a8d8f8"/><ellipse cx="8" cy="7.5" rx="3.5" ry="1.8" fill="#7ec0ea"/></g>
<g transform="translate(63.60,592.29)"><rect x="0.8" y="0.8" width="14" height="14" fill="none" stroke="#ddd" stroke-width="1"/><circle cx="5.5" cy="5.5" r="3.2" fill="#556" stroke="#ccc" stroke-width="0.8"/><path d="M7,10 V7 H13 V10" stroke="#8ccff5" stroke-width="1.2" fill="none"/><path d="M8,12 H13 C14.5,12 14.5,15 13,15 H10" stroke="#8ccff5" stroke-width="1.2" fill="none"/><polygon points="9,10.5 7,12 9,13.5" fill="#8ccff5"/></g>
<g transform="translate(91.60,218.80)"><g fill="#1aa4dc"><rect x="1.5" y="0.5" width="1" height="1"/><rect x="1.5" y="3.5" width="1" height="1"/><rect x="3.8" y="0.5" width="1" height="1"/><rect x="3.8" y="3.5" width="1" height="1"/><rect x="6.1" y="0.5" width="1" height="1"/><rect x="6.1" y="3.5" width="1" height="1"/><rect x="8.4" y="0.5" width="1" height="1"/><rect x="8.4" y="3.5" width="1" height="1"/><rect x="10.7" y="0.5" width="1" height="1"/><rect x="10.7" y="3.5" width="1" height="1"/><rect x="13.0" y="0.5" width="1" height="1"/><rect x="13.0" y="3.5" width="1" height="1"/></g><text x="8" y="15.8" font-family="Liberation Sans" font-weight="bold" font-size="11" fill="#1aa4dc" text-anchor="middle" letter-spacing="-0.8">100</text></g>
<g transform="translate(91.60,240.77)"><path d="M5.5,1.5 L1,14.5 H13.5" stroke="#1aa4dc" stroke-width="1" fill="none"/><path d="M5.5,1.5 L8.5,11" stroke="#1aa4dc" stroke-width="1" stroke-dasharray="1.5,1"/><rect x="4.5" y="0.5" width="2" height="2" fill="#e02020"/><rect x="13" y="13.5" width="2" height="2" fill="#e02020"/></g>
<g transform="translate(91.60,262.74)"><path d="M3,13 L13,3" stroke="#ddd" stroke-width="1"/><rect x="0.8" y="10.5" width="4" height="4" fill="#3b4453" stroke="#f0b88a" stroke-width="1"/><rect x="11.5" y="1" width="4" height="4" fill="#3b4453" stroke="#f0b88a" stroke-width="1"/></g>
<g transform="translate(91.60,284.71)"><path d="M0.8,15 L15.5,0.5" stroke="#ddd" stroke-width="1"/><rect x="6" y="5.5" width="4" height="4" fill="#3b4453" stroke="#f0b88a" stroke-width="1"/></g>
<g transform="translate(91.60,306.68)"><path d="M0.8,0.8 L15.2,15.2 M15.2,0.8 L0.8,15.2" stroke="#ddd" stroke-width="1"/><rect x="6" y="6" width="4" height="4" fill="#3b4453" stroke="#f0b88a" stroke-width="1"/></g>
<g transform="translate(91.60,328.65)"><circle cx="8" cy="8" r="7.2" fill="none" stroke="#ddd" stroke-width="1"/><rect x="6.5" y="6.5" width="3" height="3" fill="none" stroke="#f0b88a" stroke-width="1"/></g>
<g transform="translate(91.60,350.62)"><path d="M8,0.5 V8 M0.5,10.5 H15.5" stroke="#ddd" stroke-width="1"/><rect x="6" y="8.5" width="4" height="4" fill="#3b4453" stroke="#f0b88a" stroke-width="1"/></g>
<g transform="translate(91.60,372.59)"><circle cx="8" cy="8" r="6.2" fill="none" stroke="#aaa" stroke-width="1"/><g fill="#3b4453" stroke="#f0b88a" stroke-width="1"><rect x="6" y="0.5" width="3.5" height="3.3"/><rect x="6" y="12.5" width="3.5" height="3.3"/><rect x="0.5" y="6.5" width="3.3" height="3.3"/><rect x="12.5" y="6.5" width="3.3" height="3.3"/></g></g>
<g transform="translate(91.60,394.56)"><rect x="6.5" y="6" width="3.5" height="3.5" fill="none" stroke="#f0b88a" stroke-width="1"/></g>
<g transform="translate(91.60,416.53)"><path d="M1,0.5 V14.5 M15,0.5 V14.5" stroke="#ddd" stroke-width="1"/><path d="M2,5 H14" stroke="#8ccff5" stroke-width="1"/><polygon points="2,5 4.5,3.5 4.5,6.5" fill="#8ccff5"/><polygon points="14,5 11.5,3.5 11.5,6.5" fill="#8ccff5"/></g>
<g transform="translate(91.60,438.50)"><path d="M1,1 V6.5 M14.5,1 V6.5 M1,3.5 H14.5" stroke="#ddd" stroke-width="1"/><rect x="1" y="8" width="13.5" height="4" fill="#f0c070"/><path d="M2.5,8 V10 M4.5,8 V10 M6.5,8 V10 M8.5,8 V10 M10.5,8 V10 M12.5,8 V10" stroke="#3b4453" stroke-width="0.6"/></g>
<g transform="translate(91.60,460.47)"><rect x="1" y="2" width="14" height="10.5" fill="#eee"/><rect x="1.8" y="2.8" width="11.2" height="8" fill="#fff" stroke="#e01010" stroke-width="1.2"/><path d="M1.5,13 H15.5 V3" stroke="#111" stroke-width="1" fill="none"/></g>
<g transform="translate(91.60,482.44)"><polygon points="8,1 15,4 15,12 8,15 2,12 2,4" fill="#1a60e8"/><polygon points="2,4 8,7 8,15 2,12" fill="#20a0f0"/><polygon points="8,1 15,4 8,7 2,4" fill="#40b0f8"/><rect x="0.3" y="2.5" width="2.5" height="2.5" fill="none" stroke="#e02020" stroke-width="0.9"/></g>
<g transform="translate(91.60,504.41)"><rect x="0.5" y="1" width="15" height="14" fill="#ddd"/><rect x="1.5" y="2.5" width="5.8" height="5" fill="#000"/><rect x="8.7" y="2.5" width="5.8" height="5" fill="#000"/><rect x="1.5" y="8.7" width="5.8" height="5" fill="#000"/><rect x="8.7" y="8.7" width="5.8" height="5" fill="#000"/></g>
<g transform="translate(91.60,526.38)"><path d="M5,4 H12 L15,7 V15.5 H3 V7" fill="#bbb"/><text x="9.3" y="14" font-family="Liberation Sans" font-weight="bold" font-size="4.5" fill="#fff" text-anchor="middle">WMF</text><path d="M0.5,3 H6" stroke="#8ccff5" stroke-width="1.6"/><polygon points="5,0 9,3 5,6" fill="#8ccff5"/></g>
<g transform="translate(91.60,548.35)"><rect x="1" y="0.5" width="14" height="15" fill="#eee"/><rect x="1" y="2" width="14" height="4" fill="#111"/><rect x="1.5" y="7" width="13" height="8" fill="#f09030"/><circle cx="8.5" cy="11" r="2.6" fill="none" stroke="#eee" stroke-width="1.2"/></g>
<g transform="translate(91.60,570.32)"><rect x="0.5" y="0.5" width="15" height="15.5" fill="#111"/><rect x="0.5" y="0.5" width="14" height="14.5" fill="#e8e8e8"/><rect x="2" y="2" width="11" height="11.5" fill="none" stroke="#2a5aa8" stroke-width="1"/><path d="M3.5,3.5 H9 L11,5.5 V12 H3.5Z" fill="#c0dde0"/></g>
<g transform="translate(91.60,592.29)"><rect x="5" y="1" width="10" height="7" fill="#6a1010"/><rect x="7" y="2.5" width="8" height="5.5" fill="#fff"/><rect x="0.5" y="9" width="9" height="6.5" fill="#2a5a2a"/><rect x="2" y="10" width="8" height="6" fill="#999"/></g>
</svg>
<!--/PAL-->
</body></html>
